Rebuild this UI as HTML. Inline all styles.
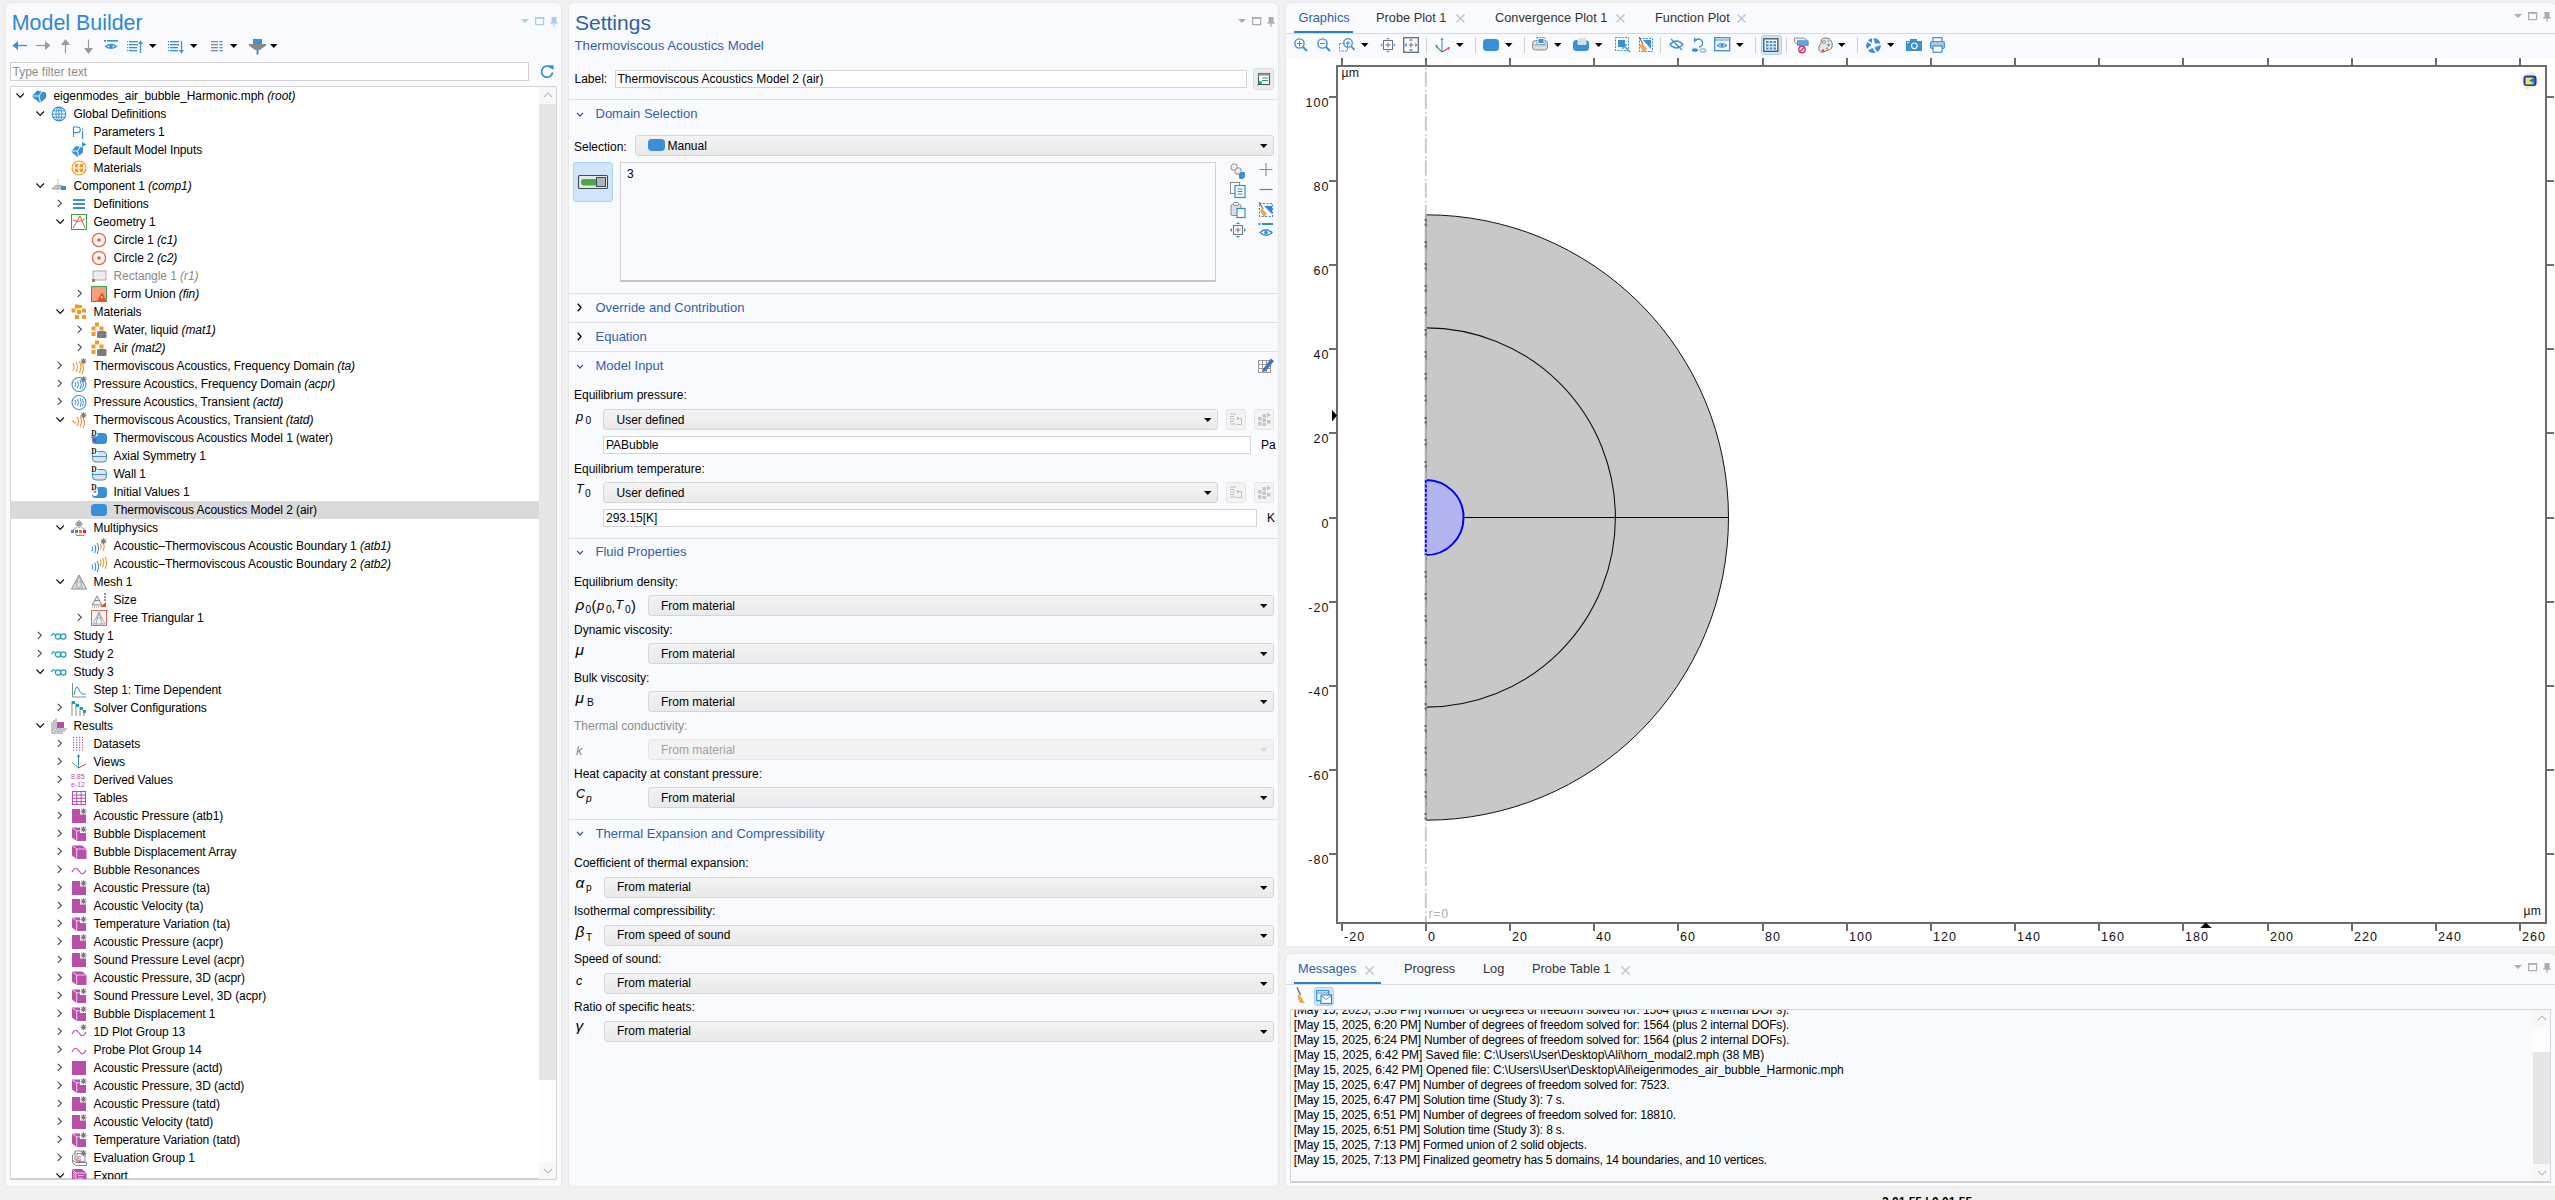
<!DOCTYPE html><html><head><meta charset="utf-8"><style>
html,body{margin:0;padding:0;}
body{width:2555px;height:1200px;overflow:hidden;background:#f0f0f0;font-family:"Liberation Sans", sans-serif;position:relative;}
.a{position:absolute;box-sizing:border-box;}
.t{position:absolute;white-space:pre;line-height:1;}
svg.a{overflow:visible;}
i{font-style:italic;}
</style></head><body>
<div class="a" style="left:5px;top:2px;width:557px;height:1185px;background:#f9fafd;border:1px solid #e7e8eb;border-radius:6px 6px 0 0;"></div>
<div class="a" style="left:568px;top:2px;width:711px;height:1185px;background:#f9fafd;border:1px solid #e7e8eb;border-radius:6px 6px 0 0;"></div>
<div class="a" style="left:1285px;top:2px;width:1272px;height:945px;background:#f9fafd;border:1px solid #e7e8eb;border-radius:6px 6px 0 0;"></div>
<div class="a" style="left:1285px;top:953px;width:1272px;height:234px;background:#f9fafd;border:1px solid #e7e8eb;border-radius:6px 6px 0 0;"></div>
<svg class="a" style="left:521px;top:16px" width="40" height="14" viewBox="0 0 40 14"><path d="M0 3 H8 L4 7 Z" fill="#a9cdea"/><rect x="14.6" y="1.6" width="8" height="7" fill="none" stroke="#a9cdea" stroke-width="1.2"/><rect x="14" y="1" width="9.2" height="1.8" fill="#a9cdea"/><rect x="30.5" y="1" width="5" height="6" fill="#a9cdea"/><rect x="29.3" y="6.3" width="7.4" height="1.4" fill="#a9cdea"/><rect x="32.4" y="7.5" width="1.2" height="3.5" fill="#a9cdea"/></svg>
<svg class="a" style="left:1238px;top:16px" width="40" height="14" viewBox="0 0 40 14"><path d="M0 3 H8 L4 7 Z" fill="#ababb0"/><rect x="14.6" y="1.6" width="8" height="7" fill="none" stroke="#ababb0" stroke-width="1.2"/><rect x="14" y="1" width="9.2" height="1.8" fill="#ababb0"/><rect x="30.5" y="1" width="5" height="6" fill="#ababb0"/><rect x="29.3" y="6.3" width="7.4" height="1.4" fill="#ababb0"/><rect x="32.4" y="7.5" width="1.2" height="3.5" fill="#ababb0"/></svg>
<svg class="a" style="left:2514px;top:11px" width="40" height="14" viewBox="0 0 40 14"><path d="M0 3 H8 L4 7 Z" fill="#ababb0"/><rect x="14.6" y="1.6" width="8" height="7" fill="none" stroke="#ababb0" stroke-width="1.2"/><rect x="14" y="1" width="9.2" height="1.8" fill="#ababb0"/><rect x="30.5" y="1" width="5" height="6" fill="#ababb0"/><rect x="29.3" y="6.3" width="7.4" height="1.4" fill="#ababb0"/><rect x="32.4" y="7.5" width="1.2" height="3.5" fill="#ababb0"/></svg>
<svg class="a" style="left:2514px;top:962px" width="40" height="14" viewBox="0 0 40 14"><path d="M0 3 H8 L4 7 Z" fill="#ababb0"/><rect x="14.6" y="1.6" width="8" height="7" fill="none" stroke="#ababb0" stroke-width="1.2"/><rect x="14" y="1" width="9.2" height="1.8" fill="#ababb0"/><rect x="30.5" y="1" width="5" height="6" fill="#ababb0"/><rect x="29.3" y="6.3" width="7.4" height="1.4" fill="#ababb0"/><rect x="32.4" y="7.5" width="1.2" height="3.5" fill="#ababb0"/></svg>
<div class="t" style="left:11.8px;top:12.88px;font-size:21.4px;color:#2b88d4;">Model Builder</div>
<svg class="a" style="left:12px;top:41px" width="16" height="9" viewBox="0 0 16 9"><path d="M0.5 4.5 L6 0 V9 Z" fill="#3a8fd6"/><path d="M4 4.5 H15" stroke="#3a8fd6" stroke-width="1.3"/></svg>
<svg class="a" style="left:35px;top:41px" width="16" height="9" viewBox="0 0 16 9"><path d="M15.5 4.5 L10 0 V9 Z" fill="#999"/><path d="M1 4.5 H12" stroke="#999" stroke-width="1.3"/></svg>
<svg class="a" style="left:61px;top:39px" width="9" height="15" viewBox="0 0 9 15"><path d="M4.5 0 L0 6 H9 Z" fill="#999"/><path d="M4.5 4 V14.5" stroke="#999" stroke-width="1.2"/></svg>
<svg class="a" style="left:84px;top:39px" width="9" height="15" viewBox="0 0 9 15"><path d="M4.5 15 L0 9 H9 Z" fill="#999"/><path d="M4.5 0.5 V11" stroke="#999" stroke-width="1.2"/></svg>
<svg class="a" style="left:104px;top:40px" width="15" height="10" viewBox="0 0 15 10"><rect x="0" y="0" width="2" height="1.6" fill="#3a8fd6"/><rect x="3" y="0" width="11" height="1.6" fill="#3a8fd6"/><path d="M1.5 6.5 Q7 2.5 12.5 6.5 Q7 10 1.5 6.5 Z" fill="none" stroke="#3a8fd6" stroke-width="1.3"/><circle cx="7" cy="6.4" r="1.6" fill="#3a8fd6"/></svg>
<svg class="a" style="left:127px;top:40px" width="17" height="14" viewBox="0 0 17 14"><rect x="0" y="1" width="1.2" height="1.2" fill="#3a8fd6"/><rect x="2" y="1" width="9" height="1.3" fill="#3a8fd6"/><rect x="0" y="4" width="1.2" height="1.2" fill="#3a8fd6"/><rect x="2" y="4" width="9" height="1.3" fill="#3a8fd6"/><rect x="0" y="7" width="1.2" height="1.2" fill="#3a8fd6"/><rect x="2" y="7" width="8" height="1.3" fill="#3a8fd6"/><rect x="0" y="10" width="1.2" height="1.2" fill="#3a8fd6"/><rect x="2" y="10" width="8" height="1.3" fill="#3a8fd6"/><path d="M13.5 1 V13" stroke="#3a8fd6" stroke-width="1.3"/><path d="M11 4 L13.5 0.5 L16 4 Z" fill="#3a8fd6"/></svg>
<svg class="a" style="left:149px;top:44px" width="8" height="5" viewBox="0 0 8 5"><path d="M0 0 H7.5 L3.75 4 Z" fill="#000"/></svg>
<svg class="a" style="left:168px;top:40px" width="17" height="14" viewBox="0 0 17 14"><rect x="0" y="1" width="1.2" height="1.2" fill="#3a8fd6"/><rect x="2" y="1" width="9" height="1.3" fill="#3a8fd6"/><rect x="0" y="4" width="1.2" height="1.2" fill="#3a8fd6"/><rect x="2" y="4" width="9" height="1.3" fill="#3a8fd6"/><rect x="0" y="7" width="1.2" height="1.2" fill="#3a8fd6"/><rect x="2" y="7" width="8" height="1.3" fill="#3a8fd6"/><rect x="0" y="10" width="1.2" height="1.2" fill="#3a8fd6"/><rect x="2" y="10" width="8" height="1.3" fill="#3a8fd6"/><path d="M13.5 1 V13" stroke="#3a8fd6" stroke-width="1.3"/><path d="M11 10 L13.5 13.5 L16 10 Z" fill="#3a8fd6"/></svg>
<svg class="a" style="left:190px;top:44px" width="8" height="5" viewBox="0 0 8 5"><path d="M0 0 H7.5 L3.75 4 Z" fill="#000"/></svg>
<svg class="a" style="left:211px;top:40px" width="12" height="13" viewBox="0 0 12 13"><rect x="0" y="1" width="7" height="1.3" fill="#888"/><rect x="8.5" y="1" width="3" height="1.3" fill="#3a8fd6"/><rect x="0" y="4" width="7" height="1.3" fill="#888"/><rect x="8.5" y="4" width="3" height="1.3" fill="#3a8fd6"/><rect x="0" y="7" width="7" height="1.3" fill="#888"/><rect x="8.5" y="7" width="3" height="1.3" fill="#3a8fd6"/><rect x="0" y="10" width="7" height="1.3" fill="#888"/><rect x="8.5" y="10" width="3" height="1.3" fill="#3a8fd6"/></svg>
<svg class="a" style="left:230px;top:44px" width="8" height="5" viewBox="0 0 8 5"><path d="M0 0 H7.5 L3.75 4 Z" fill="#000"/></svg>
<svg class="a" style="left:249px;top:39px" width="17" height="16" viewBox="0 0 17 16"><rect x="4" y="0" width="9" height="5" fill="#3a8fd6"/><path d="M0 5 H17 V6.5 L11 11 H6 L0 6.5 Z" fill="#888"/><rect x="7.5" y="11" width="2" height="4.5" fill="#3a8fd6"/></svg>
<svg class="a" style="left:270px;top:44px" width="8" height="5" viewBox="0 0 8 5"><path d="M0 0 H7.5 L3.75 4 Z" fill="#000"/></svg>
<div class="a" style="left:10px;top:62px;width:519px;height:19px;background:#fff;border:1px solid #d0d0d0;"></div>
<div class="t" style="left:12.5px;top:65.84px;font-size:12px;color:#8c8c8c;">Type filter text</div>
<svg class="a" style="left:539px;top:63px" width="16" height="16" viewBox="0 0 16 16"><path d="M12.5 5.2 A5.6 5.6 0 1 0 13.6 9.5" fill="none" stroke="#2f8ad4" stroke-width="1.6"/><path d="M9.5 2.2 L14.5 2.2 L14.5 7.2 Z" fill="#2f8ad4"/></svg>
<div class="a" style="left:10px;top:86px;width:547px;height:1094px;background:#fff;border:1px solid #d6d6d8;border-bottom:2px solid #d0d0d4;"></div>
<div class="a" style="left:539px;top:87px;width:17px;height:1092px;background:#fdfdfd;"></div>
<div class="a" style="left:539px;top:87px;width:17px;height:17px;background:#f7f7f7;"></div>
<div class="a" style="left:539px;top:104px;width:17px;height:976px;background:#e6e6e6;"></div>
<div class="a" style="left:539px;top:1162px;width:17px;height:17px;background:#f7f7f7;"></div>
<svg class="a" style="left:543px;top:92px" width="10" height="6" viewBox="0 0 10 6"><path d="M1 5 L5 1 L9 5" fill="none" stroke="#c0c0c0" stroke-width="1.2"/></svg>
<svg class="a" style="left:543px;top:1168px" width="10" height="6" viewBox="0 0 10 6"><path d="M1 1 L5 5 L9 1" fill="none" stroke="#c0c0c0" stroke-width="1.2"/></svg>
<div class="a" style="left:11px;top:87px;width:528px;height:1092px;overflow:hidden;">
<svg class="a" style="left:5.0px;top:6px" width="9" height="6" viewBox="0 0 9 6"><path d="M0.5 0.5 L4.2 4.4 L7.9 0.5" fill="none" stroke="#111" stroke-width="1.2"/></svg>
<svg class="a" style="left:20px;top:1px" width="16" height="16" viewBox="0 0 16 16"><path d="M1 8 L6 2.5 L15 4.5 L15 10 L9 15 L2.5 10 Z" fill="#3a8fd6"/><path d="M1.5 8 L8 8 L11 3.5 M8 8 L9.5 14.5" stroke="#fff" stroke-width="0.9" fill="none"/></svg>
<div class="t" style="left:42.5px;top:2.59px;font-size:12px;color:#000;letter-spacing:-0.07px;">eigenmodes_air_bubble_Harmonic.mph <i>(root)</i></div>
<svg class="a" style="left:25.0px;top:24px" width="9" height="6" viewBox="0 0 9 6"><path d="M0.5 0.5 L4.2 4.4 L7.9 0.5" fill="none" stroke="#111" stroke-width="1.2"/></svg>
<svg class="a" style="left:40px;top:19px" width="16" height="16" viewBox="0 0 16 16"><circle cx="8" cy="8" r="6.8" fill="none" stroke="#3a8fd6" stroke-width="1.2"/><ellipse cx="8" cy="8" rx="3" ry="6.8" fill="none" stroke="#3a8fd6" stroke-width="1"/><path d="M8 1.2 V14.8 M1.2 8 H14.8 M2.2 4.8 H13.8 M2.2 11.2 H13.8" stroke="#3a8fd6" stroke-width="1"/></svg>
<div class="t" style="left:62.5px;top:20.59px;font-size:12px;color:#000;letter-spacing:-0.07px;">Global Definitions</div>
<svg class="a" style="left:60px;top:37px" width="16" height="16" viewBox="0 0 16 16"><path d="M2.5 13 V3 H6.5 A2.8 2.8 0 0 1 6.5 8.6 H2.5" fill="none" stroke="#3a8fd6" stroke-width="1.1"/><path d="M11.5 7 V15" stroke="#3a8fd6" stroke-width="1.3"/><path d="M11.5 4.5 V5.8" stroke="#3a8fd6" stroke-width="1.3"/></svg>
<div class="t" style="left:82.5px;top:38.59px;font-size:12px;color:#000;letter-spacing:-0.07px;">Parameters 1</div>
<svg class="a" style="left:60px;top:55px" width="16" height="16" viewBox="0 0 16 16"><path d="M0.5 9 L5 4 L12 5.5 L12 10.5 L6.5 15 L1.5 11 Z" fill="#3a8fd6"/><path d="M1 9 L6.5 9 L9 5 M6.5 9 L7.5 14.5" stroke="#fff" stroke-width="0.9" fill="none"/><path d="M11 0 L15.5 2.5 L11 5 Z" fill="#27a0b8"/></svg>
<div class="t" style="left:82.5px;top:56.59px;font-size:12px;color:#000;letter-spacing:-0.07px;">Default Model Inputs</div>
<svg class="a" style="left:60px;top:73px" width="16" height="16" viewBox="0 0 16 16"><circle cx="8" cy="8" r="7" fill="#fdf1e0" stroke="#ef9a2a" stroke-width="1.2"/><rect x="4" y="4" width="3.3" height="3.3" fill="#ef9a2a"/><rect x="8.7" y="4" width="3.3" height="3.3" fill="#ef9a2a"/><rect x="4" y="8.7" width="3.3" height="3.3" fill="#ef9a2a"/><rect x="8.7" y="8.7" width="3.3" height="3.3" fill="#ef9a2a"/></svg>
<div class="t" style="left:82.5px;top:74.59px;font-size:12px;color:#000;letter-spacing:-0.07px;">Materials</div>
<svg class="a" style="left:25.0px;top:96px" width="9" height="6" viewBox="0 0 9 6"><path d="M0.5 0.5 L4.2 4.4 L7.9 0.5" fill="none" stroke="#111" stroke-width="1.2"/></svg>
<svg class="a" style="left:40px;top:91px" width="16" height="16" viewBox="0 0 16 16"><path d="M1 11 Q5 5 12 8 L12 11 Z" fill="#c8c8c8" stroke="#999" stroke-width="0.8"/><rect x="10" y="8" width="5" height="4" fill="#3a8fd6"/><path d="M7 1 V16" stroke="#aaa" stroke-width="0.8" stroke-dasharray="2 1"/></svg>
<div class="t" style="left:62.5px;top:92.59px;font-size:12px;color:#000;letter-spacing:-0.07px;">Component 1 <i>(comp1)</i></div>
<svg class="a" style="left:46.0px;top:112.2px" width="6" height="9" viewBox="0 0 6 9"><path d="M0.8 0.8 L4.3 4.3 L0.8 7.8" fill="none" stroke="#4a4a4a" stroke-width="1.15"/></svg>
<svg class="a" style="left:60px;top:109px" width="16" height="16" viewBox="0 0 16 16"><path d="M2 4 H14 M2 8 H14 M2 12 H14" stroke="#3a8fd6" stroke-width="2"/></svg>
<div class="t" style="left:82.5px;top:110.59px;font-size:12px;color:#000;letter-spacing:-0.07px;">Definitions</div>
<svg class="a" style="left:45.0px;top:132px" width="9" height="6" viewBox="0 0 9 6"><path d="M0.5 0.5 L4.2 4.4 L7.9 0.5" fill="none" stroke="#111" stroke-width="1.2"/></svg>
<svg class="a" style="left:60px;top:127px" width="16" height="16" viewBox="0 0 16 16"><rect x="0.5" y="0.5" width="15" height="15" fill="#fff" stroke="#3aa348" stroke-width="1"/><path d="M2 14 L9 2 L14 14 M2 6 Q8 9 14 5" fill="none" stroke="#e05a3a" stroke-width="1"/></svg>
<div class="t" style="left:82.5px;top:128.59px;font-size:12px;color:#000;letter-spacing:-0.07px;">Geometry 1</div>
<svg class="a" style="left:80px;top:145px" width="16" height="16" viewBox="0 0 16 16"><circle cx="8" cy="8" r="6.6" fill="#fdf3ef" stroke="#e06a4a" stroke-width="1.3"/><rect x="6.5" y="6.5" width="3" height="3" fill="#e05a3a"/></svg>
<div class="t" style="left:102.5px;top:146.59px;font-size:12px;color:#000;letter-spacing:-0.07px;">Circle 1 <i>(c1)</i></div>
<svg class="a" style="left:80px;top:163px" width="16" height="16" viewBox="0 0 16 16"><circle cx="8" cy="8" r="6.6" fill="#fdf3ef" stroke="#e06a4a" stroke-width="1.3"/><rect x="6.5" y="6.5" width="3" height="3" fill="#e05a3a"/></svg>
<div class="t" style="left:102.5px;top:164.59px;font-size:12px;color:#000;letter-spacing:-0.07px;">Circle 2 <i>(c2)</i></div>
<svg class="a" style="left:80px;top:181px" width="16" height="16" viewBox="0 0 16 16"><rect x="2" y="3" width="13" height="9" fill="#eee" stroke="#aaa" stroke-width="1"/><rect x="1" y="11" width="3" height="3" fill="#888"/></svg>
<div class="t" style="left:102.5px;top:182.59px;font-size:12px;color:#8a8a8a;letter-spacing:-0.07px;">Rectangle 1 <i>(r1)</i></div>
<svg class="a" style="left:66.0px;top:202.2px" width="6" height="9" viewBox="0 0 6 9"><path d="M0.8 0.8 L4.3 4.3 L0.8 7.8" fill="none" stroke="#4a4a4a" stroke-width="1.15"/></svg>
<svg class="a" style="left:80px;top:199px" width="16" height="16" viewBox="0 0 16 16"><rect x="0.5" y="0.5" width="15" height="15" fill="#f2a080" stroke="#3aa348" stroke-width="1"/><path d="M6 15 L11 6 L15.5 15 Z" fill="#e8502a"/><path d="M10.8 10 V12.5" stroke="#fff" stroke-width="1"/></svg>
<div class="t" style="left:102.5px;top:200.59px;font-size:12px;color:#000;letter-spacing:-0.07px;">Form Union <i>(fin)</i></div>
<svg class="a" style="left:45.0px;top:222px" width="9" height="6" viewBox="0 0 9 6"><path d="M0.5 0.5 L4.2 4.4 L7.9 0.5" fill="none" stroke="#111" stroke-width="1.2"/></svg>
<svg class="a" style="left:60px;top:217px" width="16" height="16" viewBox="0 0 16 16"><g fill="#ef9a2a"><rect x="4" y="0.5" width="4" height="4"/><rect x="0.5" y="4.5" width="4" height="4"/><rect x="6" y="6" width="4" height="4"/><rect x="11" y="4.5" width="4" height="4"/><rect x="4" y="11" width="4" height="4"/><rect x="11" y="11" width="4" height="4"/><rect x="8" y="1" width="3" height="3"/></g></svg>
<div class="t" style="left:82.5px;top:218.59px;font-size:12px;color:#000;letter-spacing:-0.07px;">Materials</div>
<svg class="a" style="left:66.0px;top:238.2px" width="6" height="9" viewBox="0 0 6 9"><path d="M0.8 0.8 L4.3 4.3 L0.8 7.8" fill="none" stroke="#4a4a4a" stroke-width="1.15"/></svg>
<svg class="a" style="left:80px;top:235px" width="16" height="16" viewBox="0 0 16 16"><g fill="#ef9a2a"><rect x="4" y="0.5" width="4" height="4"/><rect x="0.5" y="4.5" width="4" height="4"/><rect x="8.5" y="4.5" width="4" height="4"/><rect x="0.5" y="10" width="4" height="4"/></g><rect x="6" y="9" width="9.5" height="7" rx="1.5" fill="#7c7c7c"/></svg>
<div class="t" style="left:102.5px;top:236.59px;font-size:12px;color:#000;letter-spacing:-0.07px;">Water, liquid <i>(mat1)</i></div>
<svg class="a" style="left:66.0px;top:256.2px" width="6" height="9" viewBox="0 0 6 9"><path d="M0.8 0.8 L4.3 4.3 L0.8 7.8" fill="none" stroke="#4a4a4a" stroke-width="1.15"/></svg>
<svg class="a" style="left:80px;top:253px" width="16" height="16" viewBox="0 0 16 16"><g fill="#ef9a2a"><rect x="4" y="0.5" width="4" height="4"/><rect x="0.5" y="4.5" width="4" height="4"/><rect x="8.5" y="4.5" width="4" height="4"/><rect x="0.5" y="10" width="4" height="4"/></g><rect x="6" y="9" width="9.5" height="7" rx="1.5" fill="#7c7c7c"/></svg>
<div class="t" style="left:102.5px;top:254.59px;font-size:12px;color:#000;letter-spacing:-0.07px;">Air <i>(mat2)</i></div>
<svg class="a" style="left:46.0px;top:274.2px" width="6" height="9" viewBox="0 0 6 9"><path d="M0.8 0.8 L4.3 4.3 L0.8 7.8" fill="none" stroke="#4a4a4a" stroke-width="1.15"/></svg>
<svg class="a" style="left:60px;top:271px" width="16" height="16" viewBox="0 0 16 16"><g fill="none" stroke="#ef9a2a" stroke-width="1.1"><path d="M2 5 Q4 9 2 13"/><path d="M5 4 Q8 9 5 14"/><path d="M8 3 Q12 9 8 15"/><path d="M11 6 Q14 10 11 16"/></g><g stroke="#7a7a7a" stroke-width="1.1"><path d="M12.5 0.3 v6 M9.5 3.3 h6 M10.4 1.2 l4.2 4.2 M14.6 1.2 l-4.2 4.2"/></g></svg>
<div class="t" style="left:82.5px;top:272.59px;font-size:12px;color:#000;letter-spacing:-0.07px;">Thermoviscous Acoustics, Frequency Domain <i>(ta)</i></div>
<svg class="a" style="left:46.0px;top:292.2px" width="6" height="9" viewBox="0 0 6 9"><path d="M0.8 0.8 L4.3 4.3 L0.8 7.8" fill="none" stroke="#4a4a4a" stroke-width="1.15"/></svg>
<svg class="a" style="left:60px;top:289px" width="16" height="16" viewBox="0 0 16 16"><circle cx="8" cy="8.5" r="7" fill="none" stroke="#3a8fd6" stroke-width="1.1"/><g fill="none" stroke="#3a8fd6" stroke-width="1"><path d="M4 6 Q5.5 8.5 4 11"/><path d="M6.5 5 Q8.5 8.5 6.5 12"/><path d="M9 4 Q11.5 8.5 9 13"/><path d="M11.5 5 Q13.5 8.5 11.5 12"/></g><g stroke="#7a7a7a" stroke-width="1.1"><path d="M12.5 0.3 v6 M9.5 3.3 h6 M10.4 1.2 l4.2 4.2 M14.6 1.2 l-4.2 4.2"/></g></svg>
<div class="t" style="left:82.5px;top:290.59px;font-size:12px;color:#000;letter-spacing:-0.07px;">Pressure Acoustics, Frequency Domain <i>(acpr)</i></div>
<svg class="a" style="left:46.0px;top:310.2px" width="6" height="9" viewBox="0 0 6 9"><path d="M0.8 0.8 L4.3 4.3 L0.8 7.8" fill="none" stroke="#4a4a4a" stroke-width="1.15"/></svg>
<svg class="a" style="left:60px;top:307px" width="16" height="16" viewBox="0 0 16 16"><circle cx="8" cy="8.5" r="7" fill="none" stroke="#3a8fd6" stroke-width="1.1"/><g fill="none" stroke="#3a8fd6" stroke-width="1"><path d="M4 6 Q5.5 8.5 4 11"/><path d="M6.5 5 Q8.5 8.5 6.5 12"/><path d="M9 4 Q11.5 8.5 9 13"/><path d="M11.5 5 Q13.5 8.5 11.5 12"/></g></svg>
<div class="t" style="left:82.5px;top:308.59px;font-size:12px;color:#000;letter-spacing:-0.07px;">Pressure Acoustics, Transient <i>(actd)</i></div>
<svg class="a" style="left:45.0px;top:330px" width="9" height="6" viewBox="0 0 9 6"><path d="M0.5 0.5 L4.2 4.4 L7.9 0.5" fill="none" stroke="#111" stroke-width="1.2"/></svg>
<svg class="a" style="left:60px;top:325px" width="16" height="16" viewBox="0 0 16 16"><g fill="none" stroke="#ef9a2a" stroke-width="1.1"><path d="M1 10 Q2 8 3 10 Q4 12 5 10"/><path d="M6 5 Q9 9 6 14"/><path d="M9 4 Q12 9 9 15"/><path d="M12 6 Q15 10 12 16"/></g><g stroke="#7a7a7a" stroke-width="1.1"><path d="M12.5 0.3 v6 M9.5 3.3 h6 M10.4 1.2 l4.2 4.2 M14.6 1.2 l-4.2 4.2"/></g></svg>
<div class="t" style="left:82.5px;top:326.59px;font-size:12px;color:#000;letter-spacing:-0.07px;">Thermoviscous Acoustics, Transient <i>(tatd)</i></div>
<svg class="a" style="left:80px;top:343px" width="16" height="16" viewBox="0 0 16 16"><rect x="1" y="3" width="15" height="11" rx="3.5" fill="#3a8fd6"/><rect x="0" y="0" width="6.5" height="6.5" fill="#fff"/><rect x="0" y="6.5" width="7" height="1.3" fill="#3a8fd6"/><path d="M1.5 9 L6 9 L3.75 12.5 Z" fill="#e02060"/><text x="0.3" y="6.2" font-size="7.5" font-family="Liberation Serif" font-weight="bold" fill="#111">D</text></svg>
<div class="t" style="left:102.5px;top:344.59px;font-size:12px;color:#000;letter-spacing:-0.07px;">Thermoviscous Acoustics Model 1 (water)</div>
<svg class="a" style="left:80px;top:361px" width="16" height="16" viewBox="0 0 16 16"><rect x="1.5" y="3.5" width="14" height="10.5" rx="3.5" fill="#e2e2e4" stroke="#3a8fd6" stroke-width="1"/><path d="M1.5 8.5 H15.5" stroke="#3a8fd6" stroke-width="1"/><rect x="0" y="0" width="6.5" height="6.5" fill="#fff"/><text x="0.3" y="6.2" font-size="7.5" font-family="Liberation Serif" font-weight="bold" fill="#111">D</text></svg>
<div class="t" style="left:102.5px;top:362.59px;font-size:12px;color:#000;letter-spacing:-0.07px;">Axial Symmetry 1</div>
<svg class="a" style="left:80px;top:379px" width="16" height="16" viewBox="0 0 16 16"><rect x="1.5" y="3.5" width="14" height="10.5" rx="3.5" fill="#e2e2e4" stroke="#3a8fd6" stroke-width="1"/><path d="M1.5 8.5 H15.5" stroke="#3a8fd6" stroke-width="1"/><rect x="0" y="0" width="6.5" height="6.5" fill="#fff"/><text x="0.3" y="6.2" font-size="7.5" font-family="Liberation Serif" font-weight="bold" fill="#111">D</text></svg>
<div class="t" style="left:102.5px;top:380.59px;font-size:12px;color:#000;letter-spacing:-0.07px;">Wall 1</div>
<svg class="a" style="left:80px;top:397px" width="16" height="16" viewBox="0 0 16 16"><rect x="1" y="3" width="15" height="11" rx="3.5" fill="#3a8fd6"/><rect x="0" y="0" width="6.5" height="6.5" fill="#fff"/><path d="M1 6.5 H7 V9 A3 3 0 0 1 1 9 Z" fill="#fff"/><path d="M2.2 7.3 H5.8 L4 9.6 Z" fill="#e8502a"/><text x="0.3" y="6.2" font-size="7.5" font-family="Liberation Serif" font-weight="bold" fill="#111">D</text></svg>
<div class="t" style="left:102.5px;top:398.59px;font-size:12px;color:#000;letter-spacing:-0.07px;">Initial Values 1</div>
<div class="a" style="left:0px;top:414px;width:528px;height:18px;background:#dadadc;"></div>
<svg class="a" style="left:80px;top:415px" width="16" height="16" viewBox="0 0 16 16"><rect x="0" y="2" width="16" height="12" rx="3.5" fill="#3a8fd6"/></svg>
<div class="t" style="left:102.5px;top:416.59px;font-size:12px;color:#000;letter-spacing:-0.07px;">Thermoviscous Acoustics Model 2 (air)</div>
<svg class="a" style="left:45.0px;top:438px" width="9" height="6" viewBox="0 0 9 6"><path d="M0.5 0.5 L4.2 4.4 L7.9 0.5" fill="none" stroke="#111" stroke-width="1.2"/></svg>
<svg class="a" style="left:60px;top:433px" width="16" height="16" viewBox="0 0 16 16"><g fill="none" stroke="#888" stroke-width="0.9"><ellipse cx="8" cy="4" rx="3.5" ry="1.6"/><ellipse cx="8" cy="4" rx="1.6" ry="3.5"/><path d="M2 10 L6 7 M14 10 L10 7 M5 13.5 V15.5 H13 V13.5 M9 13.5 V15.5"/></g><circle cx="8" cy="4" r="1" fill="#3aa348"/><rect x="0" y="10" width="3" height="3" fill="#3a8fd6"/><rect x="4" y="10" width="3" height="3" fill="#3aa348"/><rect x="8" y="10" width="3" height="3" fill="#f07030"/><rect x="12" y="10" width="3" height="3" fill="#e0108a"/></svg>
<div class="t" style="left:82.5px;top:434.59px;font-size:12px;color:#000;letter-spacing:-0.07px;">Multiphysics</div>
<svg class="a" style="left:80px;top:451px" width="16" height="16" viewBox="0 0 16 16"><g fill="none" stroke="#3a8fd6" stroke-width="1.1"><path d="M1 8.5 Q2.6 11 1 13.5"/><path d="M3.6 6.8 Q5.8 11 3.6 15"/><path d="M6.2 5 Q8.8 10.5 6.2 16"/></g><g fill="none" stroke="#ef9a2a" stroke-width="1.1"><path d="M9.3 6 Q11.3 8.8 9.3 11.5"/><path d="M11.8 4.8 Q14.5 8.8 11.8 13"/></g><g stroke="#7a7a7a" stroke-width="1.1"><path d="M12.5 0.3 v6 M9.5 3.3 h6 M10.4 1.2 l4.2 4.2 M14.6 1.2 l-4.2 4.2"/></g></svg>
<div class="t" style="left:102.5px;top:452.59px;font-size:12px;color:#000;letter-spacing:-0.07px;">Acoustic–Thermoviscous Acoustic Boundary 1 <i>(atb1)</i></div>
<svg class="a" style="left:80px;top:469px" width="16" height="16" viewBox="0 0 16 16"><g fill="none" stroke="#3a8fd6" stroke-width="1.1"><path d="M1 8.5 Q2.6 11 1 13.5"/><path d="M3.6 6.8 Q5.8 11 3.6 15"/><path d="M6.2 5 Q8.8 10.5 6.2 16"/></g><g fill="none" stroke="#ef9a2a" stroke-width="1.1"><path d="M9 3.5 Q11 6.8 9 10"/><path d="M11.5 2 Q14 6.8 11.5 11.5"/><path d="M14 0.7 Q17 6.8 14 12.8"/></g></svg>
<div class="t" style="left:102.5px;top:470.59px;font-size:12px;color:#000;letter-spacing:-0.07px;">Acoustic–Thermoviscous Acoustic Boundary 2 <i>(atb2)</i></div>
<svg class="a" style="left:45.0px;top:492px" width="9" height="6" viewBox="0 0 9 6"><path d="M0.5 0.5 L4.2 4.4 L7.9 0.5" fill="none" stroke="#111" stroke-width="1.2"/></svg>
<svg class="a" style="left:60px;top:487px" width="16" height="16" viewBox="0 0 16 16"><path d="M8 1 L15.5 15 H0.5 Z" fill="#e4e4e4" stroke="#8a8a8a" stroke-width="1"/><path d="M4.3 8 H11.7 M8 1 L4.3 15 M8 1 L11.7 15 M4.3 8 L8 15 L11.7 8" fill="none" stroke="#9a9a9a" stroke-width="0.7"/></svg>
<div class="t" style="left:82.5px;top:488.59px;font-size:12px;color:#000;letter-spacing:-0.07px;">Mesh 1</div>
<svg class="a" style="left:80px;top:505px" width="16" height="16" viewBox="0 0 16 16"><path d="M6 4 L11 13 H1 Z M3.5 8.5 H8.5" fill="#eee" stroke="#888" stroke-width="1"/><path d="M14 1 V10" stroke="#777" stroke-width="1.5" stroke-dasharray="2 1"/><path d="M9 15 L15 10 V15 Z" fill="#e8502a"/><path d="M1 15 H9" stroke="#888" stroke-dasharray="1 1"/></svg>
<div class="t" style="left:102.5px;top:506.59px;font-size:12px;color:#000;letter-spacing:-0.07px;">Size</div>
<svg class="a" style="left:66.0px;top:526.2px" width="6" height="9" viewBox="0 0 6 9"><path d="M0.8 0.8 L4.3 4.3 L0.8 7.8" fill="none" stroke="#4a4a4a" stroke-width="1.15"/></svg>
<svg class="a" style="left:80px;top:523px" width="16" height="16" viewBox="0 0 16 16"><rect x="0.5" y="0.5" width="15" height="15" fill="#f4f4f4" stroke="#e06a4a" stroke-width="1"/><path d="M2 14 L8 2 L14 14 Z M5 8 H11 M8 2 L5 14 M8 2 L11 14" fill="none" stroke="#999" stroke-width="0.8"/></svg>
<div class="t" style="left:102.5px;top:524.59px;font-size:12px;color:#000;letter-spacing:-0.07px;">Free Triangular 1</div>
<svg class="a" style="left:26.0px;top:544.2px" width="6" height="9" viewBox="0 0 6 9"><path d="M0.8 0.8 L4.3 4.3 L0.8 7.8" fill="none" stroke="#4a4a4a" stroke-width="1.15"/></svg>
<svg class="a" style="left:40px;top:541px" width="16" height="16" viewBox="0 0 16 16"><g fill="none" stroke="#1f9ab3" stroke-width="1.2"><path d="M0.5 8 Q2 4 4 7"/><circle cx="7" cy="8.5" r="2.6"/><circle cx="12.3" cy="8.5" r="2.6"/></g></svg>
<div class="t" style="left:62.5px;top:542.59px;font-size:12px;color:#000;letter-spacing:-0.07px;">Study 1</div>
<svg class="a" style="left:26.0px;top:562.2px" width="6" height="9" viewBox="0 0 6 9"><path d="M0.8 0.8 L4.3 4.3 L0.8 7.8" fill="none" stroke="#4a4a4a" stroke-width="1.15"/></svg>
<svg class="a" style="left:40px;top:559px" width="16" height="16" viewBox="0 0 16 16"><g fill="none" stroke="#1f9ab3" stroke-width="1.2"><path d="M0.5 8 Q2 4 4 7"/><circle cx="7" cy="8.5" r="2.6"/><circle cx="12.3" cy="8.5" r="2.6"/></g></svg>
<div class="t" style="left:62.5px;top:560.59px;font-size:12px;color:#000;letter-spacing:-0.07px;">Study 2</div>
<svg class="a" style="left:25.0px;top:582px" width="9" height="6" viewBox="0 0 9 6"><path d="M0.5 0.5 L4.2 4.4 L7.9 0.5" fill="none" stroke="#111" stroke-width="1.2"/></svg>
<svg class="a" style="left:40px;top:577px" width="16" height="16" viewBox="0 0 16 16"><g fill="none" stroke="#1f9ab3" stroke-width="1.2"><path d="M0.5 8 Q2 4 4 7"/><circle cx="7" cy="8.5" r="2.6"/><circle cx="12.3" cy="8.5" r="2.6"/></g></svg>
<div class="t" style="left:62.5px;top:578.59px;font-size:12px;color:#000;letter-spacing:-0.07px;">Study 3</div>
<svg class="a" style="left:60px;top:595px" width="16" height="16" viewBox="0 0 16 16"><path d="M1.5 1 V15 H15" fill="none" stroke="#888" stroke-width="1"/><path d="M3 13 Q5 2 7 6 T11 12 H15" fill="none" stroke="#1f9ab3" stroke-width="1"/></svg>
<div class="t" style="left:82.5px;top:596.59px;font-size:12px;color:#000;letter-spacing:-0.07px;">Step 1: Time Dependent</div>
<svg class="a" style="left:46.0px;top:616.2px" width="6" height="9" viewBox="0 0 6 9"><path d="M0.8 0.8 L4.3 4.3 L0.8 7.8" fill="none" stroke="#4a4a4a" stroke-width="1.15"/></svg>
<svg class="a" style="left:60px;top:613px" width="16" height="16" viewBox="0 0 16 16"><path d="M1 1 V16 M5 3 V16 M9 7 V16 M13 10 V16" stroke="#888" stroke-width="1"/><rect x="1" y="1" width="3" height="3" fill="#1f9ab3"/><rect x="5" y="4" width="3" height="3" fill="#1f9ab3"/><rect x="9" y="7" width="3" height="3" fill="#1f9ab3"/><rect x="12" y="10" width="3" height="3" fill="#1f9ab3"/></svg>
<div class="t" style="left:82.5px;top:614.59px;font-size:12px;color:#000;letter-spacing:-0.07px;">Solver Configurations</div>
<svg class="a" style="left:25.0px;top:636px" width="9" height="6" viewBox="0 0 9 6"><path d="M0.5 0.5 L4.2 4.4 L7.9 0.5" fill="none" stroke="#111" stroke-width="1.2"/></svg>
<svg class="a" style="left:40px;top:631px" width="16" height="16" viewBox="0 0 16 16"><path d="M1 4 V15 H12 M3 2 V13 H14 M5 0.5 V11 H16" fill="none" stroke="#888" stroke-width="1"/><rect x="6" y="4" width="7" height="6" fill="#b74fa8"/></svg>
<div class="t" style="left:62.5px;top:632.59px;font-size:12px;color:#000;letter-spacing:-0.07px;">Results</div>
<svg class="a" style="left:46.0px;top:652.2px" width="6" height="9" viewBox="0 0 6 9"><path d="M0.8 0.8 L4.3 4.3 L0.8 7.8" fill="none" stroke="#4a4a4a" stroke-width="1.15"/></svg>
<svg class="a" style="left:60px;top:649px" width="16" height="16" viewBox="0 0 16 16"><g fill="#b74fa8"><rect x="2" y="1.0" width="1.2" height="1.2"/><rect x="2" y="3.5" width="1.2" height="1.2"/><rect x="2" y="6.0" width="1.2" height="1.2"/><rect x="2" y="8.5" width="1.2" height="1.2"/><rect x="2" y="11.0" width="1.2" height="1.2"/><rect x="2" y="13.5" width="1.2" height="1.2"/><rect x="5" y="1.0" width="1.2" height="1.2"/><rect x="5" y="3.5" width="1.2" height="1.2"/><rect x="5" y="6.0" width="1.2" height="1.2"/><rect x="5" y="8.5" width="1.2" height="1.2"/><rect x="5" y="11.0" width="1.2" height="1.2"/><rect x="5" y="13.5" width="1.2" height="1.2"/><rect x="8" y="1.0" width="1.2" height="1.2"/><rect x="8" y="3.5" width="1.2" height="1.2"/><rect x="8" y="6.0" width="1.2" height="1.2"/><rect x="8" y="8.5" width="1.2" height="1.2"/><rect x="8" y="11.0" width="1.2" height="1.2"/><rect x="8" y="13.5" width="1.2" height="1.2"/><rect x="11" y="1.0" width="1.2" height="1.2"/><rect x="11" y="3.5" width="1.2" height="1.2"/><rect x="11" y="6.0" width="1.2" height="1.2"/><rect x="11" y="8.5" width="1.2" height="1.2"/><rect x="11" y="11.0" width="1.2" height="1.2"/><rect x="11" y="13.5" width="1.2" height="1.2"/></g></svg>
<div class="t" style="left:82.5px;top:650.59px;font-size:12px;color:#000;letter-spacing:-0.07px;">Datasets</div>
<svg class="a" style="left:46.0px;top:670.2px" width="6" height="9" viewBox="0 0 6 9"><path d="M0.8 0.8 L4.3 4.3 L0.8 7.8" fill="none" stroke="#4a4a4a" stroke-width="1.15"/></svg>
<svg class="a" style="left:60px;top:667px" width="16" height="16" viewBox="0 0 16 16"><path d="M7.5 14 V2" stroke="#3a8fd6" stroke-width="1"/><path d="M5.5 3 L7.5 0 L9.5 3 Z" fill="#3a8fd6"/><path d="M7.5 14 L1 8" stroke="#3aa348" stroke-width="1"/><path d="M7.5 14 L15 10" stroke="#e03060" stroke-width="1"/></svg>
<div class="t" style="left:82.5px;top:668.59px;font-size:12px;color:#000;letter-spacing:-0.07px;">Views</div>
<svg class="a" style="left:46.0px;top:688.2px" width="6" height="9" viewBox="0 0 6 9"><path d="M0.8 0.8 L4.3 4.3 L0.8 7.8" fill="none" stroke="#4a4a4a" stroke-width="1.15"/></svg>
<svg class="a" style="left:60px;top:685px" width="16" height="16" viewBox="0 0 16 16"><text x="0" y="7" font-size="7" font-family="Liberation Sans" fill="#b74fa8">8.85</text><text x="0" y="14.5" font-size="7" font-family="Liberation Sans" fill="#b74fa8">e-12</text></svg>
<div class="t" style="left:82.5px;top:686.59px;font-size:12px;color:#000;letter-spacing:-0.07px;">Derived Values</div>
<svg class="a" style="left:46.0px;top:706.2px" width="6" height="9" viewBox="0 0 6 9"><path d="M0.8 0.8 L4.3 4.3 L0.8 7.8" fill="none" stroke="#4a4a4a" stroke-width="1.15"/></svg>
<svg class="a" style="left:60px;top:703px" width="16" height="16" viewBox="0 0 16 16"><rect x="1.5" y="1.5" width="13" height="13" fill="none" stroke="#b74fa8" stroke-width="1.1"/><path d="M1.5 5 H14.5 M1.5 8.3 H14.5 M1.5 11.6 H14.5 M5.8 1.5 V14.5 M10.2 1.5 V14.5" stroke="#b74fa8" stroke-width="1"/></svg>
<div class="t" style="left:82.5px;top:704.59px;font-size:12px;color:#000;letter-spacing:-0.07px;">Tables</div>
<svg class="a" style="left:46.0px;top:724.2px" width="6" height="9" viewBox="0 0 6 9"><path d="M0.8 0.8 L4.3 4.3 L0.8 7.8" fill="none" stroke="#4a4a4a" stroke-width="1.15"/></svg>
<svg class="a" style="left:60px;top:721px" width="16" height="16" viewBox="0 0 16 16"><path d="M1 1 H9 V6.5 H15 V15 H1 Z" fill="#b74fa8"/><g stroke="#7a7a7a" stroke-width="1.1"><path d="M12.5 0.3 v6 M9.5 3.3 h6 M10.4 1.2 l4.2 4.2 M14.6 1.2 l-4.2 4.2"/></g></svg>
<div class="t" style="left:82.5px;top:722.59px;font-size:12px;color:#000;letter-spacing:-0.07px;">Acoustic Pressure (atb1)</div>
<svg class="a" style="left:46.0px;top:742.2px" width="6" height="9" viewBox="0 0 6 9"><path d="M0.8 0.8 L4.3 4.3 L0.8 7.8" fill="none" stroke="#4a4a4a" stroke-width="1.15"/></svg>
<svg class="a" style="left:60px;top:739px" width="16" height="16" viewBox="0 0 16 16"><path d="M1 1.5 L9 1.5 V7 H15 V15 H5.5 L1 11.5 Z" fill="#b74fa8"/><path d="M1.2 1.8 L5.7 4.8 H9 M5.7 4.8 V15" stroke="#f4dcf0" stroke-width="0.9" fill="none"/><g stroke="#7a7a7a" stroke-width="1.1"><path d="M12.5 0.3 v6 M9.5 3.3 h6 M10.4 1.2 l4.2 4.2 M14.6 1.2 l-4.2 4.2"/></g></svg>
<div class="t" style="left:82.5px;top:740.59px;font-size:12px;color:#000;letter-spacing:-0.07px;">Bubble Displacement</div>
<svg class="a" style="left:46.0px;top:760.2px" width="6" height="9" viewBox="0 0 6 9"><path d="M0.8 0.8 L4.3 4.3 L0.8 7.8" fill="none" stroke="#4a4a4a" stroke-width="1.15"/></svg>
<svg class="a" style="left:60px;top:757px" width="16" height="16" viewBox="0 0 16 16"><path d="M1 1.5 L11 1.5 L15.5 5 V15 H5.5 L1 11.5 Z" fill="#b74fa8"/><path d="M1.2 1.8 L5.7 5 H15.5 M5.7 5 V15" stroke="#f4dcf0" stroke-width="0.9" fill="none"/></svg>
<div class="t" style="left:82.5px;top:758.59px;font-size:12px;color:#000;letter-spacing:-0.07px;">Bubble Displacement Array</div>
<svg class="a" style="left:46.0px;top:778.2px" width="6" height="9" viewBox="0 0 6 9"><path d="M0.8 0.8 L4.3 4.3 L0.8 7.8" fill="none" stroke="#4a4a4a" stroke-width="1.15"/></svg>
<svg class="a" style="left:60px;top:775px" width="16" height="16" viewBox="0 0 16 16"><path d="M1 10 Q4 3 8 9 T15 8" fill="none" stroke="#b74fa8" stroke-width="1.2"/></svg>
<div class="t" style="left:82.5px;top:776.59px;font-size:12px;color:#000;letter-spacing:-0.07px;">Bubble Resonances</div>
<svg class="a" style="left:46.0px;top:796.2px" width="6" height="9" viewBox="0 0 6 9"><path d="M0.8 0.8 L4.3 4.3 L0.8 7.8" fill="none" stroke="#4a4a4a" stroke-width="1.15"/></svg>
<svg class="a" style="left:60px;top:793px" width="16" height="16" viewBox="0 0 16 16"><path d="M1 1 H9 V6.5 H15 V15 H1 Z" fill="#b74fa8"/><g stroke="#7a7a7a" stroke-width="1.1"><path d="M12.5 0.3 v6 M9.5 3.3 h6 M10.4 1.2 l4.2 4.2 M14.6 1.2 l-4.2 4.2"/></g></svg>
<div class="t" style="left:82.5px;top:794.59px;font-size:12px;color:#000;letter-spacing:-0.07px;">Acoustic Pressure (ta)</div>
<svg class="a" style="left:46.0px;top:814.2px" width="6" height="9" viewBox="0 0 6 9"><path d="M0.8 0.8 L4.3 4.3 L0.8 7.8" fill="none" stroke="#4a4a4a" stroke-width="1.15"/></svg>
<svg class="a" style="left:60px;top:811px" width="16" height="16" viewBox="0 0 16 16"><path d="M1 1 H9 V6.5 H15 V15 H1 Z" fill="#b74fa8"/><g stroke="#7a7a7a" stroke-width="1.1"><path d="M12.5 0.3 v6 M9.5 3.3 h6 M10.4 1.2 l4.2 4.2 M14.6 1.2 l-4.2 4.2"/></g></svg>
<div class="t" style="left:82.5px;top:812.59px;font-size:12px;color:#000;letter-spacing:-0.07px;">Acoustic Velocity (ta)</div>
<svg class="a" style="left:46.0px;top:832.2px" width="6" height="9" viewBox="0 0 6 9"><path d="M0.8 0.8 L4.3 4.3 L0.8 7.8" fill="none" stroke="#4a4a4a" stroke-width="1.15"/></svg>
<svg class="a" style="left:60px;top:829px" width="16" height="16" viewBox="0 0 16 16"><path d="M1 1.5 L9 1.5 V7 H15 V15 H5.5 L1 11.5 Z" fill="#b74fa8"/><path d="M1.2 1.8 L5.7 4.8 H9 M5.7 4.8 V15" stroke="#f4dcf0" stroke-width="0.9" fill="none"/><g stroke="#7a7a7a" stroke-width="1.1"><path d="M12.5 0.3 v6 M9.5 3.3 h6 M10.4 1.2 l4.2 4.2 M14.6 1.2 l-4.2 4.2"/></g></svg>
<div class="t" style="left:82.5px;top:830.59px;font-size:12px;color:#000;letter-spacing:-0.07px;">Temperature Variation (ta)</div>
<svg class="a" style="left:46.0px;top:850.2px" width="6" height="9" viewBox="0 0 6 9"><path d="M0.8 0.8 L4.3 4.3 L0.8 7.8" fill="none" stroke="#4a4a4a" stroke-width="1.15"/></svg>
<svg class="a" style="left:60px;top:847px" width="16" height="16" viewBox="0 0 16 16"><path d="M1 1 H9 V6.5 H15 V15 H1 Z" fill="#b74fa8"/><g stroke="#7a7a7a" stroke-width="1.1"><path d="M12.5 0.3 v6 M9.5 3.3 h6 M10.4 1.2 l4.2 4.2 M14.6 1.2 l-4.2 4.2"/></g></svg>
<div class="t" style="left:82.5px;top:848.59px;font-size:12px;color:#000;letter-spacing:-0.07px;">Acoustic Pressure (acpr)</div>
<svg class="a" style="left:46.0px;top:868.2px" width="6" height="9" viewBox="0 0 6 9"><path d="M0.8 0.8 L4.3 4.3 L0.8 7.8" fill="none" stroke="#4a4a4a" stroke-width="1.15"/></svg>
<svg class="a" style="left:60px;top:865px" width="16" height="16" viewBox="0 0 16 16"><path d="M1 1 H9 V6.5 H15 V15 H1 Z" fill="#b74fa8"/><g stroke="#7a7a7a" stroke-width="1.1"><path d="M12.5 0.3 v6 M9.5 3.3 h6 M10.4 1.2 l4.2 4.2 M14.6 1.2 l-4.2 4.2"/></g></svg>
<div class="t" style="left:82.5px;top:866.59px;font-size:12px;color:#000;letter-spacing:-0.07px;">Sound Pressure Level (acpr)</div>
<svg class="a" style="left:46.0px;top:886.2px" width="6" height="9" viewBox="0 0 6 9"><path d="M0.8 0.8 L4.3 4.3 L0.8 7.8" fill="none" stroke="#4a4a4a" stroke-width="1.15"/></svg>
<svg class="a" style="left:60px;top:883px" width="16" height="16" viewBox="0 0 16 16"><path d="M1 1.5 L11 1.5 L15.5 5 V15 H5.5 L1 11.5 Z" fill="#b74fa8"/><path d="M1.2 1.8 L5.7 5 H15.5 M5.7 5 V15" stroke="#f4dcf0" stroke-width="0.9" fill="none"/></svg>
<div class="t" style="left:82.5px;top:884.59px;font-size:12px;color:#000;letter-spacing:-0.07px;">Acoustic Pressure, 3D (acpr)</div>
<svg class="a" style="left:46.0px;top:904.2px" width="6" height="9" viewBox="0 0 6 9"><path d="M0.8 0.8 L4.3 4.3 L0.8 7.8" fill="none" stroke="#4a4a4a" stroke-width="1.15"/></svg>
<svg class="a" style="left:60px;top:901px" width="16" height="16" viewBox="0 0 16 16"><path d="M1 1.5 L9 1.5 V7 H15 V15 H5.5 L1 11.5 Z" fill="#b74fa8"/><path d="M1.2 1.8 L5.7 4.8 H9 M5.7 4.8 V15" stroke="#f4dcf0" stroke-width="0.9" fill="none"/><g stroke="#7a7a7a" stroke-width="1.1"><path d="M12.5 0.3 v6 M9.5 3.3 h6 M10.4 1.2 l4.2 4.2 M14.6 1.2 l-4.2 4.2"/></g></svg>
<div class="t" style="left:82.5px;top:902.59px;font-size:12px;color:#000;letter-spacing:-0.07px;">Sound Pressure Level, 3D (acpr)</div>
<svg class="a" style="left:46.0px;top:922.2px" width="6" height="9" viewBox="0 0 6 9"><path d="M0.8 0.8 L4.3 4.3 L0.8 7.8" fill="none" stroke="#4a4a4a" stroke-width="1.15"/></svg>
<svg class="a" style="left:60px;top:919px" width="16" height="16" viewBox="0 0 16 16"><path d="M1 1.5 L9 1.5 V7 H15 V15 H5.5 L1 11.5 Z" fill="#b74fa8"/><path d="M1.2 1.8 L5.7 4.8 H9 M5.7 4.8 V15" stroke="#f4dcf0" stroke-width="0.9" fill="none"/><g stroke="#7a7a7a" stroke-width="1.1"><path d="M12.5 0.3 v6 M9.5 3.3 h6 M10.4 1.2 l4.2 4.2 M14.6 1.2 l-4.2 4.2"/></g></svg>
<div class="t" style="left:82.5px;top:920.59px;font-size:12px;color:#000;letter-spacing:-0.07px;">Bubble Displacement 1</div>
<svg class="a" style="left:46.0px;top:940.2px" width="6" height="9" viewBox="0 0 6 9"><path d="M0.8 0.8 L4.3 4.3 L0.8 7.8" fill="none" stroke="#4a4a4a" stroke-width="1.15"/></svg>
<svg class="a" style="left:60px;top:937px" width="16" height="16" viewBox="0 0 16 16"><path d="M1 10 Q4 3 8 9 T15 8" fill="none" stroke="#b74fa8" stroke-width="1.2"/><g stroke="#7a7a7a" stroke-width="1.1"><path d="M12.5 0.3 v6 M9.5 3.3 h6 M10.4 1.2 l4.2 4.2 M14.6 1.2 l-4.2 4.2"/></g></svg>
<div class="t" style="left:82.5px;top:938.59px;font-size:12px;color:#000;letter-spacing:-0.07px;">1D Plot Group 13</div>
<svg class="a" style="left:46.0px;top:958.2px" width="6" height="9" viewBox="0 0 6 9"><path d="M0.8 0.8 L4.3 4.3 L0.8 7.8" fill="none" stroke="#4a4a4a" stroke-width="1.15"/></svg>
<svg class="a" style="left:60px;top:955px" width="16" height="16" viewBox="0 0 16 16"><path d="M1 10 Q4 3 8 9 T15 8" fill="none" stroke="#b74fa8" stroke-width="1.2"/></svg>
<div class="t" style="left:82.5px;top:956.59px;font-size:12px;color:#000;letter-spacing:-0.07px;">Probe Plot Group 14</div>
<svg class="a" style="left:46.0px;top:976.2px" width="6" height="9" viewBox="0 0 6 9"><path d="M0.8 0.8 L4.3 4.3 L0.8 7.8" fill="none" stroke="#4a4a4a" stroke-width="1.15"/></svg>
<svg class="a" style="left:60px;top:973px" width="16" height="16" viewBox="0 0 16 16"><rect x="1" y="1" width="14" height="14" fill="#b74fa8"/></svg>
<div class="t" style="left:82.5px;top:974.59px;font-size:12px;color:#000;letter-spacing:-0.07px;">Acoustic Pressure (actd)</div>
<svg class="a" style="left:46.0px;top:994.2px" width="6" height="9" viewBox="0 0 6 9"><path d="M0.8 0.8 L4.3 4.3 L0.8 7.8" fill="none" stroke="#4a4a4a" stroke-width="1.15"/></svg>
<svg class="a" style="left:60px;top:991px" width="16" height="16" viewBox="0 0 16 16"><path d="M1 1.5 L9 1.5 V7 H15 V15 H5.5 L1 11.5 Z" fill="#b74fa8"/><path d="M1.2 1.8 L5.7 4.8 H9 M5.7 4.8 V15" stroke="#f4dcf0" stroke-width="0.9" fill="none"/><g stroke="#7a7a7a" stroke-width="1.1"><path d="M12.5 0.3 v6 M9.5 3.3 h6 M10.4 1.2 l4.2 4.2 M14.6 1.2 l-4.2 4.2"/></g></svg>
<div class="t" style="left:82.5px;top:992.59px;font-size:12px;color:#000;letter-spacing:-0.07px;">Acoustic Pressure, 3D (actd)</div>
<svg class="a" style="left:46.0px;top:1012.2px" width="6" height="9" viewBox="0 0 6 9"><path d="M0.8 0.8 L4.3 4.3 L0.8 7.8" fill="none" stroke="#4a4a4a" stroke-width="1.15"/></svg>
<svg class="a" style="left:60px;top:1009px" width="16" height="16" viewBox="0 0 16 16"><path d="M1 1 H9 V6.5 H15 V15 H1 Z" fill="#b74fa8"/><g stroke="#7a7a7a" stroke-width="1.1"><path d="M12.5 0.3 v6 M9.5 3.3 h6 M10.4 1.2 l4.2 4.2 M14.6 1.2 l-4.2 4.2"/></g></svg>
<div class="t" style="left:82.5px;top:1010.59px;font-size:12px;color:#000;letter-spacing:-0.07px;">Acoustic Pressure (tatd)</div>
<svg class="a" style="left:46.0px;top:1030.2px" width="6" height="9" viewBox="0 0 6 9"><path d="M0.8 0.8 L4.3 4.3 L0.8 7.8" fill="none" stroke="#4a4a4a" stroke-width="1.15"/></svg>
<svg class="a" style="left:60px;top:1027px" width="16" height="16" viewBox="0 0 16 16"><path d="M1 1 H9 V6.5 H15 V15 H1 Z" fill="#b74fa8"/><g stroke="#7a7a7a" stroke-width="1.1"><path d="M12.5 0.3 v6 M9.5 3.3 h6 M10.4 1.2 l4.2 4.2 M14.6 1.2 l-4.2 4.2"/></g></svg>
<div class="t" style="left:82.5px;top:1028.59px;font-size:12px;color:#000;letter-spacing:-0.07px;">Acoustic Velocity (tatd)</div>
<svg class="a" style="left:46.0px;top:1048.2px" width="6" height="9" viewBox="0 0 6 9"><path d="M0.8 0.8 L4.3 4.3 L0.8 7.8" fill="none" stroke="#4a4a4a" stroke-width="1.15"/></svg>
<svg class="a" style="left:60px;top:1045px" width="16" height="16" viewBox="0 0 16 16"><path d="M1 1.5 L9 1.5 V7 H15 V15 H5.5 L1 11.5 Z" fill="#b74fa8"/><path d="M1.2 1.8 L5.7 4.8 H9 M5.7 4.8 V15" stroke="#f4dcf0" stroke-width="0.9" fill="none"/><g stroke="#7a7a7a" stroke-width="1.1"><path d="M12.5 0.3 v6 M9.5 3.3 h6 M10.4 1.2 l4.2 4.2 M14.6 1.2 l-4.2 4.2"/></g></svg>
<div class="t" style="left:82.5px;top:1046.59px;font-size:12px;color:#000;letter-spacing:-0.07px;">Temperature Variation (tatd)</div>
<svg class="a" style="left:46.0px;top:1066.2px" width="6" height="9" viewBox="0 0 6 9"><path d="M0.8 0.8 L4.3 4.3 L0.8 7.8" fill="none" stroke="#4a4a4a" stroke-width="1.15"/></svg>
<svg class="a" style="left:60px;top:1063px" width="16" height="16" viewBox="0 0 16 16"><g fill="#fff" stroke="#888" stroke-width="1"><path d="M4 1 H12 V10 H4 Z"/><path d="M1.5 5 L4 3 M1.5 5 V13 L5 15.5 H15.5 V12.5 H5 L1.5 10"/></g><rect x="6" y="3.5" width="8" height="8" fill="#fff" stroke="#888" stroke-width="0.9"/><text x="6.5" y="10.5" font-size="6.5" font-family="Liberation Sans" fill="#b74fa8">8</text><g stroke="#7a7a7a" stroke-width="1.1"><path d="M12.5 0.3 v6 M9.5 3.3 h6 M10.4 1.2 l4.2 4.2 M14.6 1.2 l-4.2 4.2"/></g></svg>
<div class="t" style="left:82.5px;top:1064.59px;font-size:12px;color:#000;letter-spacing:-0.07px;">Evaluation Group 1</div>
<svg class="a" style="left:45.0px;top:1086px" width="9" height="6" viewBox="0 0 9 6"><path d="M0.5 0.5 L4.2 4.4 L7.9 0.5" fill="none" stroke="#111" stroke-width="1.2"/></svg>
<svg class="a" style="left:60px;top:1081px" width="16" height="16" viewBox="0 0 16 16"><path d="M1 1 H11 L15.5 5 V16 H5 L1 12.5 Z" fill="#b74fa8"/><path d="M1.3 1.3 L5 5 H15.5 M5 5 V16" stroke="#f4dcf0" stroke-width="0.9" fill="none"/><path d="M7 7.5 H13 M7 10 H12 M3 4 L3 10" stroke="#f4dcf0" stroke-width="0.8"/></svg>
<div class="t" style="left:82.5px;top:1082.59px;font-size:12px;color:#000;letter-spacing:-0.07px;">Export</div>
</div>
<div class="t" style="left:575px;top:12.22px;font-size:21px;color:#2f5fa8;">Settings</div>
<div class="t" style="left:574.5px;top:38.78px;font-size:13.25px;color:#2f5fa8;">Thermoviscous Acoustics Model</div>
<div class="t" style="left:574.5px;top:72.84px;font-size:12px;color:#000;">Label:</div>
<div class="a" style="left:615px;top:70px;width:632px;height:18px;background:#fff;border:1px solid #d4d4d4;"></div>
<div class="t" style="left:617.5px;top:72.84px;font-size:12px;color:#000;">Thermoviscous Acoustics Model 2 (air)</div>
<div class="a" style="left:1253px;top:68px;width:21px;height:22px;background:#ececec;border:1px solid #dcdcdc;border-radius:3px;"></div>
<svg class="a" style="left:1257px;top:72px" width="14" height="14" viewBox="0 0 14 14"><rect x="1.5" y="1.5" width="11" height="11" fill="#fff" stroke="#555" stroke-width="1.1"/><rect x="1.5" y="1.5" width="11" height="2.2" fill="#999"/><path d="M5 6 H11 M5 8.5 H11" stroke="#19a28a" stroke-width="1"/><path d="M0.5 13.5 L4 10 M2 10 H4 V12" stroke="#19a28a" stroke-width="1.4" fill="none"/></svg>
<div class="a" style="left:569px;top:99px;width:710px;height:1px;background:#dde0e4;"></div>
<svg class="a" style="left:575.5px;top:111.5px" width="8" height="5" viewBox="0 0 8 5"><path d="M1 0.8 L4 4 L7 0.8" fill="none" stroke="#2f5596" stroke-width="1.2"/></svg>
<div class="t" style="left:595.5px;top:107.00px;font-size:13px;color:#2f5fa8;">Domain Selection</div>
<div class="t" style="left:574px;top:140.84px;font-size:12px;color:#000;">Selection:</div>
<div class="a" style="left:635px;top:135px;width:639px;height:21px;background:linear-gradient(#f3f3f3,#e9e9e9);border:1px solid #d6d6d6;border-radius:3px;"></div>
<svg class="a" style="left:1260px;top:144px" width="8" height="4" viewBox="0 0 8 4"><path d="M0 0 H7.5 L3.75 4 Z" fill="#000"/></svg>
<div class="a" style="left:648px;top:139px;width:17px;height:12px;background:#3a8fd6;border-radius:4px;"></div>
<div class="t" style="left:667.5px;top:139.84px;font-size:12px;color:#000;">Manual</div>
<div class="a" style="left:573px;top:162px;width:40px;height:40px;background:#cfe6fa;border:1px solid #a9d1f3;border-radius:3px;"></div>
<svg class="a" style="left:578px;top:175px" width="31" height="15" viewBox="0 0 31 15"><rect x="0.5" y="0.5" width="29" height="13" rx="1" fill="#e6e6e6" stroke="#3d4a5c" stroke-width="1.1"/><rect x="3" y="4" width="16" height="6.5" rx="3" fill="#4aa84a"/><rect x="18.5" y="2.5" width="9" height="9" fill="#b4b4b4" stroke="#3d4a5c" stroke-width="1"/></svg>
<div class="a" style="left:620px;top:162px;width:596px;height:120px;background:#f9fafd;border:1px solid #d2d2d2;border-bottom:2px solid #c4c4c4;"></div>
<div class="t" style="left:627px;top:167.84px;font-size:12px;color:#000;">3</div>
<svg class="a" style="left:1230px;top:163px" width="16" height="16" viewBox="0 0 16 16"><g fill="#eee" stroke="#888" stroke-width="0.9"><path d="M1 3 L3 1 H6 L7 2 V5 L5 7 H2 L1 6 Z"/><path d="M5 7 L7 5 H10 L11 6 V9 L9 11 H6 L5 10 Z"/></g><path d="M9 11 L11 9 H14 L15 10 V14 L13 16 H10 L9 15 Z" fill="#3a8fd6"/></svg>
<svg class="a" style="left:1230px;top:182px" width="16" height="16" viewBox="0 0 16 16"><rect x="0.5" y="0.5" width="9" height="11" fill="#fff" stroke="#888"/><rect x="5" y="3.5" width="10" height="12" fill="#fff" stroke="#2f8ad4" stroke-width="1.2"/><path d="M7.5 7 H12.5 M7.5 9.5 H12.5 M7.5 12 H12.5" stroke="#2f8ad4" stroke-width="1"/></svg>
<svg class="a" style="left:1230px;top:202px" width="16" height="16" viewBox="0 0 16 16"><rect x="1" y="2.5" width="10" height="11" rx="1.5" fill="#ddd" stroke="#888"/><rect x="3.5" y="0.5" width="5" height="3" rx="1" fill="#eee" stroke="#888"/><rect x="7" y="6.5" width="8" height="9" fill="#fff" stroke="#2f8ad4" stroke-width="1.2"/></svg>
<svg class="a" style="left:1230px;top:222px" width="16" height="16" viewBox="0 0 16 16"><rect x="3.5" y="3.5" width="9" height="9" fill="none" stroke="#777" stroke-width="1"/><path d="M8 5.5 V10.5 M5.5 8 H10.5" stroke="#777"/><path d="M8 0 L10 2 H6 Z M8 16 L10 14 H6 Z M0 8 L2 6 V10 Z M16 8 L14 6 V10 Z" fill="#2f8ad4"/></svg>
<svg class="a" style="left:1258px;top:162px" width="16" height="16" viewBox="0 0 16 16"><path d="M8 1 V14 M1.5 7.5 H14.5" stroke="#8a8a8a" stroke-width="1.1"/></svg>
<svg class="a" style="left:1258px;top:182px" width="16" height="16" viewBox="0 0 16 16"><path d="M1.5 7.5 H14.5" stroke="#2f8ad4" stroke-width="1.2"/></svg>
<svg class="a" style="left:1258px;top:202px" width="16" height="16" viewBox="0 0 16 16"><rect x="1.5" y="1.5" width="13" height="13" fill="none" stroke="#2f8ad4" stroke-width="1.1" stroke-dasharray="2 1.5"/><path d="M6 4 L14 4 L14 12 Z" fill="#2f8ad4"/><path d="M1 0 L5 7" stroke="#555" stroke-width="1"/><path d="M4 6 L9 12 L6 15 L2 9 Z" fill="#f0a848"/></svg>
<svg class="a" style="left:1258px;top:222px" width="16" height="16" viewBox="0 0 16 16"><rect x="0.5" y="1" width="2" height="2" fill="#2f8ad4"/><rect x="4" y="1" width="11" height="2" fill="#2f8ad4"/><path d="M2 10.5 Q8 5 14 10.5 Q8 16 2 10.5 Z" fill="none" stroke="#2f8ad4" stroke-width="1.3"/><circle cx="8" cy="10.5" r="1.8" fill="#2f8ad4"/></svg>
<div class="a" style="left:569px;top:293px;width:710px;height:1px;background:#dde0e4;"></div>
<svg class="a" style="left:577px;top:303px" width="5" height="9" viewBox="0 0 5 9"><path d="M0.8 0.8 L4 4.5 L0.8 8.2" fill="none" stroke="#000" stroke-width="1.3"/></svg>
<div class="t" style="left:595.5px;top:301.00px;font-size:13px;color:#2f5fa8;">Override and Contribution</div>
<div class="a" style="left:569px;top:322px;width:710px;height:1px;background:#dde0e4;"></div>
<svg class="a" style="left:577px;top:332px" width="5" height="9" viewBox="0 0 5 9"><path d="M0.8 0.8 L4 4.5 L0.8 8.2" fill="none" stroke="#000" stroke-width="1.3"/></svg>
<div class="t" style="left:595.5px;top:330.00px;font-size:13px;color:#2f5fa8;">Equation</div>
<div class="a" style="left:569px;top:351px;width:710px;height:1px;background:#dde0e4;"></div>
<svg class="a" style="left:575.5px;top:363.5px" width="8" height="5" viewBox="0 0 8 5"><path d="M1 0.8 L4 4 L7 0.8" fill="none" stroke="#2f5596" stroke-width="1.2"/></svg>
<div class="t" style="left:595.5px;top:359.00px;font-size:13px;color:#2f5fa8;">Model Input</div>
<svg class="a" style="left:1258px;top:357px" width="16" height="16" viewBox="0 0 16 16"><g fill="none" stroke="#999" stroke-width="1"><rect x="0.5" y="3.5" width="12" height="12"/><path d="M0.5 7.5 H12.5 M0.5 11.5 H12.5 M4.5 3.5 V15.5 M8.5 3.5 V15.5"/></g><path d="M5 12 L13 1.5 L16 4 L8 14 L4.5 15 Z" fill="#3c78c0"/></svg>
<div class="t" style="left:574px;top:388.84px;font-size:12px;color:#000;">Equilibrium pressure:</div>
<div class="t" style="left:576px;top:410.00px;font-size:13px;color:#000;font-style:italic;">p</div>
<div class="t" style="left:585.5px;top:416.37px;font-size:10.2px;color:#000;">0</div>
<div class="a" style="left:603px;top:409px;width:615px;height:21px;background:linear-gradient(#f3f3f3,#e9e9e9);border:1px solid #d6d6d6;border-radius:3px;"></div>
<svg class="a" style="left:1204px;top:418px" width="8" height="4" viewBox="0 0 8 4"><path d="M0 0 H7.5 L3.75 4 Z" fill="#000"/></svg>
<div class="t" style="left:616.5px;top:413.84px;font-size:12px;color:#000;">User defined</div>
<div class="a" style="left:1226px;top:409px;width:20px;height:21px;background:#f3f3f4;border:1px solid #e4e4e6;border-radius:3px;"></div>
<svg class="a" style="left:1229px;top:412px" width="14" height="14" viewBox="0 0 14 14"><path d="M1 2 H7 M1 4.5 H5 M1 7 H6 M1 9.5 H5 M1 12 H7" stroke="#bcbcbc" stroke-width="1"/><path d="M8.5 6.5 H12.5 V12.5 H8" fill="none" stroke="#bcbcbc"/><path d="M8 4.5 L10.5 6.5 L8 8.5 Z" fill="#bcbcbc"/></svg>
<div class="a" style="left:1254px;top:409px;width:20px;height:21px;background:#f3f3f4;border:1px solid #e4e4e6;border-radius:3px;"></div>
<svg class="a" style="left:1257px;top:412px" width="14" height="14" viewBox="0 0 14 14"><g fill="#c4c4c4"><rect x="1" y="5" width="3.5" height="3.5"/><rect x="5.5" y="2" width="3.5" height="3.5"/><rect x="5.5" y="6.5" width="3.5" height="3.5"/><rect x="1" y="10" width="3.5" height="3.5"/><rect x="5.5" y="11" width="3.5" height="3"/><rect x="10" y="8" width="3.5" height="3.5"/><path d="M10 0.5 L14 3 L10 5.5 Z"/></g></svg>
<div class="a" style="left:603px;top:436px;width:648px;height:18px;background:#fff;border:1px solid #d4d4d4;"></div>
<div class="t" style="left:606px;top:438.84px;font-size:12px;color:#000;">PABubble</div>
<div class="t" style="left:1261px;top:438.84px;font-size:12px;color:#000;">Pa</div>
<div class="t" style="left:574px;top:462.84px;font-size:12px;color:#000;">Equilibrium temperature:</div>
<div class="t" style="left:576px;top:483.42px;font-size:12.5px;color:#000;font-style:italic;">T</div>
<div class="t" style="left:585px;top:489.37px;font-size:10.2px;color:#000;">0</div>
<div class="a" style="left:603px;top:482px;width:615px;height:21px;background:linear-gradient(#f3f3f3,#e9e9e9);border:1px solid #d6d6d6;border-radius:3px;"></div>
<svg class="a" style="left:1204px;top:491px" width="8" height="4" viewBox="0 0 8 4"><path d="M0 0 H7.5 L3.75 4 Z" fill="#000"/></svg>
<div class="t" style="left:616.5px;top:486.84px;font-size:12px;color:#000;">User defined</div>
<div class="a" style="left:1226px;top:482px;width:20px;height:21px;background:#f3f3f4;border:1px solid #e4e4e6;border-radius:3px;"></div>
<svg class="a" style="left:1229px;top:485px" width="14" height="14" viewBox="0 0 14 14"><path d="M1 2 H7 M1 4.5 H5 M1 7 H6 M1 9.5 H5 M1 12 H7" stroke="#bcbcbc" stroke-width="1"/><path d="M8.5 6.5 H12.5 V12.5 H8" fill="none" stroke="#bcbcbc"/><path d="M8 4.5 L10.5 6.5 L8 8.5 Z" fill="#bcbcbc"/></svg>
<div class="a" style="left:1254px;top:482px;width:20px;height:21px;background:#f3f3f4;border:1px solid #e4e4e6;border-radius:3px;"></div>
<svg class="a" style="left:1257px;top:485px" width="14" height="14" viewBox="0 0 14 14"><g fill="#c4c4c4"><rect x="1" y="5" width="3.5" height="3.5"/><rect x="5.5" y="2" width="3.5" height="3.5"/><rect x="5.5" y="6.5" width="3.5" height="3.5"/><rect x="1" y="10" width="3.5" height="3.5"/><rect x="5.5" y="11" width="3.5" height="3"/><rect x="10" y="8" width="3.5" height="3.5"/><path d="M10 0.5 L14 3 L10 5.5 Z"/></g></svg>
<div class="a" style="left:603px;top:509px;width:654px;height:18px;background:#fff;border:1px solid #d4d4d4;"></div>
<div class="t" style="left:606px;top:511.84px;font-size:12px;color:#000;">293.15[K]</div>
<div class="t" style="left:1267px;top:511.84px;font-size:12px;color:#000;">K</div>
<div class="a" style="left:569px;top:538px;width:710px;height:1px;background:#dde0e4;"></div>
<svg class="a" style="left:575.5px;top:549.5px" width="8" height="5" viewBox="0 0 8 5"><path d="M1 0.8 L4 4 L7 0.8" fill="none" stroke="#2f5596" stroke-width="1.2"/></svg>
<div class="t" style="left:595.5px;top:545.00px;font-size:13px;color:#2f5fa8;">Fluid Properties</div>
<div class="t" style="left:574px;top:575.84px;font-size:12px;color:#000;">Equilibrium density:</div>
<div class="a" style="left:648px;top:595px;width:626px;height:21px;background:linear-gradient(#f3f3f3,#e9e9e9);border:1px solid #d6d6d6;border-radius:3px;"></div>
<svg class="a" style="left:1260px;top:604px" width="8" height="4" viewBox="0 0 8 4"><path d="M0 0 H7.5 L3.75 4 Z" fill="#000"/></svg>
<div class="t" style="left:661px;top:599.84px;font-size:12px;color:#000;">From material</div>
<div class="t" style="left:575.5px;top:596.88px;font-size:15.5px;color:#000;font-style:italic;">ρ</div>
<div class="t" style="left:585.5px;top:605.37px;font-size:10.2px;color:#000;">0</div>
<div class="t" style="left:591.5px;top:598.73px;font-size:14.5px;color:#000;font-weight:300;">(</div>
<div class="t" style="left:597px;top:599.00px;font-size:13px;color:#000;font-style:italic;">p</div>
<div class="t" style="left:606px;top:605.37px;font-size:10.2px;color:#000;">0</div>
<div class="t" style="left:612px;top:601.00px;font-size:13px;color:#000;font-style:italic;">,</div>
<div class="t" style="left:615.5px;top:599.42px;font-size:12.5px;color:#000;font-style:italic;">T</div>
<div class="t" style="left:625px;top:605.37px;font-size:10.2px;color:#000;">0</div>
<div class="t" style="left:631px;top:598.73px;font-size:14.5px;color:#000;font-weight:300;">)</div>
<div class="t" style="left:574px;top:623.84px;font-size:12px;color:#000;">Dynamic viscosity:</div>
<div class="a" style="left:648px;top:643px;width:626px;height:21px;background:linear-gradient(#f3f3f3,#e9e9e9);border:1px solid #d6d6d6;border-radius:3px;"></div>
<svg class="a" style="left:1260px;top:652px" width="8" height="4" viewBox="0 0 8 4"><path d="M0 0 H7.5 L3.75 4 Z" fill="#000"/></svg>
<div class="t" style="left:661px;top:647.84px;font-size:12px;color:#000;">From material</div>
<div class="t" style="left:575.5px;top:641.88px;font-size:15.5px;color:#000;font-style:italic;">μ</div>
<div class="t" style="left:574px;top:671.84px;font-size:12px;color:#000;">Bulk viscosity:</div>
<div class="a" style="left:648px;top:691px;width:626px;height:21px;background:linear-gradient(#f3f3f3,#e9e9e9);border:1px solid #d6d6d6;border-radius:3px;"></div>
<svg class="a" style="left:1260px;top:700px" width="8" height="4" viewBox="0 0 8 4"><path d="M0 0 H7.5 L3.75 4 Z" fill="#000"/></svg>
<div class="t" style="left:661px;top:695.84px;font-size:12px;color:#000;">From material</div>
<div class="t" style="left:575.5px;top:689.88px;font-size:15.5px;color:#000;font-style:italic;">μ</div>
<div class="t" style="left:587px;top:698.37px;font-size:10.2px;color:#000;">B</div>
<div class="t" style="left:574px;top:719.84px;font-size:12px;color:#8c8c8c;">Thermal conductivity:</div>
<div class="a" style="left:648px;top:739px;width:626px;height:21px;background:#f2f2f2;border:1px solid #e6e6e6;border-radius:3px;"></div>
<svg class="a" style="left:1260px;top:748px" width="8" height="4" viewBox="0 0 8 4"><path d="M0 0 H7.5 L3.75 4 Z" fill="#d8d8d8"/></svg>
<div class="t" style="left:661px;top:743.84px;font-size:12px;color:#a0a0a0;">From material</div>
<div class="t" style="left:576px;top:744.00px;font-size:13px;color:#8c8c8c;font-style:italic;">k</div>
<div class="t" style="left:574px;top:767.84px;font-size:12px;color:#000;">Heat capacity at constant pressure:</div>
<div class="a" style="left:648px;top:787px;width:626px;height:21px;background:linear-gradient(#f3f3f3,#e9e9e9);border:1px solid #d6d6d6;border-radius:3px;"></div>
<svg class="a" style="left:1260px;top:796px" width="8" height="4" viewBox="0 0 8 4"><path d="M0 0 H7.5 L3.75 4 Z" fill="#000"/></svg>
<div class="t" style="left:661px;top:791.84px;font-size:12px;color:#000;">From material</div>
<div class="t" style="left:576px;top:788.42px;font-size:12.5px;color:#000;font-style:italic;">C</div>
<div class="t" style="left:586px;top:794.37px;font-size:10.2px;color:#000;font-style:italic;">p</div>
<div class="a" style="left:569px;top:819px;width:710px;height:1px;background:#dde0e4;"></div>
<svg class="a" style="left:575.5px;top:831.0px" width="8" height="5" viewBox="0 0 8 5"><path d="M1 0.8 L4 4 L7 0.8" fill="none" stroke="#2f5596" stroke-width="1.2"/></svg>
<div class="t" style="left:595.5px;top:826.50px;font-size:13px;color:#2f5fa8;">Thermal Expansion and Compressibility</div>
<div class="t" style="left:574px;top:857.34px;font-size:12px;color:#000;">Coefficient of thermal expansion:</div>
<div class="a" style="left:604px;top:876.5px;width:670px;height:21px;background:linear-gradient(#f3f3f3,#e9e9e9);border:1px solid #d6d6d6;border-radius:3px;"></div>
<svg class="a" style="left:1260px;top:885.5px" width="8" height="4" viewBox="0 0 8 4"><path d="M0 0 H7.5 L3.75 4 Z" fill="#000"/></svg>
<div class="t" style="left:617px;top:881.34px;font-size:12px;color:#000;">From material</div>
<div class="t" style="left:575.5px;top:874.88px;font-size:15.5px;color:#000;font-style:italic;">α</div>
<div class="t" style="left:586px;top:883.37px;font-size:10.2px;color:#000;">p</div>
<div class="t" style="left:574px;top:905.34px;font-size:12px;color:#000;">Isothermal compressibility:</div>
<div class="a" style="left:604px;top:924.5px;width:670px;height:21px;background:linear-gradient(#f3f3f3,#e9e9e9);border:1px solid #d6d6d6;border-radius:3px;"></div>
<svg class="a" style="left:1260px;top:933.5px" width="8" height="4" viewBox="0 0 8 4"><path d="M0 0 H7.5 L3.75 4 Z" fill="#000"/></svg>
<div class="t" style="left:617px;top:929.34px;font-size:12px;color:#000;">From speed of sound</div>
<div class="t" style="left:575.5px;top:923.88px;font-size:15.5px;color:#000;font-style:italic;">β</div>
<div class="t" style="left:586px;top:933.37px;font-size:10.2px;color:#000;">T</div>
<div class="t" style="left:574px;top:953.34px;font-size:12px;color:#000;">Speed of sound:</div>
<div class="a" style="left:604px;top:972.5px;width:670px;height:21px;background:linear-gradient(#f3f3f3,#e9e9e9);border:1px solid #d6d6d6;border-radius:3px;"></div>
<svg class="a" style="left:1260px;top:981.5px" width="8" height="4" viewBox="0 0 8 4"><path d="M0 0 H7.5 L3.75 4 Z" fill="#000"/></svg>
<div class="t" style="left:617px;top:977.34px;font-size:12px;color:#000;">From material</div>
<div class="t" style="left:576px;top:975.42px;font-size:12.5px;color:#000;font-style:italic;">c</div>
<div class="t" style="left:574px;top:1001.34px;font-size:12px;color:#000;">Ratio of specific heats:</div>
<div class="a" style="left:604px;top:1020.5px;width:670px;height:21px;background:linear-gradient(#f3f3f3,#e9e9e9);border:1px solid #d6d6d6;border-radius:3px;"></div>
<svg class="a" style="left:1260px;top:1029.5px" width="8" height="4" viewBox="0 0 8 4"><path d="M0 0 H7.5 L3.75 4 Z" fill="#000"/></svg>
<div class="t" style="left:617px;top:1025.34px;font-size:12px;color:#000;">From material</div>
<div class="t" style="left:575.5px;top:1017.88px;font-size:15.5px;color:#000;font-style:italic;">γ</div>
<div class="t" style="left:1298.5px;top:12.16px;font-size:12.8px;color:#2f5fa8;">Graphics</div>
<div class="t" style="left:1376px;top:12.16px;font-size:12.8px;color:#333;">Probe Plot 1</div>
<svg class="a" style="left:1456px;top:13.5px" width="9" height="9" viewBox="0 0 9 9"><path d="M0.5 0.5 L8.5 8.5 M8.5 0.5 L0.5 8.5" stroke="#bcc0c8" stroke-width="1.25"/></svg>
<div class="t" style="left:1495px;top:12.16px;font-size:12.8px;color:#333;">Convergence Plot 1</div>
<svg class="a" style="left:1616px;top:13.5px" width="9" height="9" viewBox="0 0 9 9"><path d="M0.5 0.5 L8.5 8.5 M8.5 0.5 L0.5 8.5" stroke="#bcc0c8" stroke-width="1.25"/></svg>
<div class="t" style="left:1655px;top:12.16px;font-size:12.8px;color:#333;">Function Plot</div>
<svg class="a" style="left:1737px;top:13.5px" width="9" height="9" viewBox="0 0 9 9"><path d="M0.5 0.5 L8.5 8.5 M8.5 0.5 L0.5 8.5" stroke="#bcc0c8" stroke-width="1.25"/></svg>
<div class="a" style="left:1286px;top:33px;width:1269px;height:1px;background:#d6d8dc;"></div>
<div class="a" style="left:1294px;top:31px;width:59px;height:2px;background:#2a7fd0;"></div>
<svg class="a" style="left:1294px;top:38px" width="14" height="14" viewBox="0 0 14 14"><circle cx="5.5" cy="5.5" r="4.6" fill="none" stroke="#3a8fd6" stroke-width="1.4"/><path d="M9 9 L13 13" stroke="#3a8fd6" stroke-width="2"/><path d="M5.5 3 V8 M3 5.5 H8" stroke="#3a8fd6" stroke-width="1.1"/></svg>
<svg class="a" style="left:1317px;top:38px" width="14" height="14" viewBox="0 0 14 14"><circle cx="5.5" cy="5.5" r="4.6" fill="none" stroke="#3a8fd6" stroke-width="1.4"/><path d="M9 9 L13 13" stroke="#3a8fd6" stroke-width="2"/><path d="M3 5.5 H8" stroke="#3a8fd6" stroke-width="1.1"/></svg>
<svg class="a" style="left:1339px;top:38px" width="17" height="14" viewBox="0 0 17 14"><rect x="0.5" y="5.5" width="8" height="7.5" fill="none" stroke="#3a8fd6" stroke-width="1" stroke-dasharray="2 1.2"/><circle cx="9" cy="5" r="4.3" fill="none" stroke="#3a8fd6" stroke-width="1.3"/><path d="M12 8 L15.5 12" stroke="#3a8fd6" stroke-width="1.8"/><path d="M9 3 V7 M7 5 H11" stroke="#3a8fd6" stroke-width="1"/></svg>
<svg class="a" style="left:1361px;top:43px" width="8" height="5" viewBox="0 0 8 5"><path d="M0 0 H7.5 L3.75 4 Z" fill="#000"/></svg>
<svg class="a" style="left:1380px;top:37px" width="16" height="16" viewBox="0 0 16 16"><rect x="3.5" y="3.5" width="9" height="9" fill="none" stroke="#777"/><path d="M8 5.5 V10.5 M5.5 8 H10.5" stroke="#777"/><path d="M8 0.5 L9.8 2.3 H6.2 Z M8 15.5 L9.8 13.7 H6.2 Z M0.5 8 L2.3 6.2 V9.8 Z M15.5 8 L13.7 6.2 V9.8 Z" fill="#3a8fd6"/></svg>
<svg class="a" style="left:1403px;top:37px" width="16" height="16" viewBox="0 0 16 16"><rect x="0.7" y="0.7" width="14.6" height="14.6" fill="none" stroke="#6a6a6a" stroke-width="1.3"/><path d="M8 5.5 V10.5 M5.5 8 H10.5" stroke="#777"/><path d="M8 1.5 L10 3.8 H6 Z M8 14.5 L10 12.2 H6 Z M1.5 8 L3.8 6 V10 Z M14.5 8 L12.2 6 V10 Z" fill="#3a8fd6"/></svg>
<div class="a" style="left:1426px;top:37px;width:1px;height:16px;background:#d0d0d0;"></div>
<svg class="a" style="left:1434px;top:37px" width="17" height="16" viewBox="0 0 17 16"><path d="M8 15 V2" stroke="#3a8fd6" stroke-width="1.1"/><path d="M6.5 3 L8 0.5 L9.5 3 Z" fill="#3a8fd6"/><path d="M8 15 L2 9" stroke="#3aa348" stroke-width="1.1"/><path d="M1 8 L4 8.5 L2.5 11 Z" fill="#3aa348"/><path d="M8 15 L15 11" stroke="#e03060" stroke-width="1.1"/><path d="M16 10.5 L13.5 10 L14.5 13 Z" fill="#e03060"/></svg>
<svg class="a" style="left:1456px;top:43px" width="8" height="5" viewBox="0 0 8 5"><path d="M0 0 H7.5 L3.75 4 Z" fill="#000"/></svg>
<div class="a" style="left:1475px;top:37px;width:1px;height:16px;background:#d0d0d0;"></div>
<svg class="a" style="left:1483px;top:39px" width="16" height="12" viewBox="0 0 16 12"><rect x="0" y="0" width="16" height="12" rx="3.5" fill="#3a8fd6"/></svg>
<svg class="a" style="left:1505px;top:43px" width="8" height="5" viewBox="0 0 8 5"><path d="M0 0 H7.5 L3.75 4 Z" fill="#000"/></svg>
<div class="a" style="left:1524px;top:37px;width:1px;height:16px;background:#d0d0d0;"></div>
<svg class="a" style="left:1532px;top:37px" width="16" height="14" viewBox="0 0 16 14"><rect x="0.5" y="3.5" width="15" height="9.5" rx="3" fill="#ddd" stroke="#8a8a8a"/><path d="M0.5 8 H15.5" stroke="#999" stroke-width="0.8"/><rect x="5" y="0.5" width="8" height="7" fill="#f9fafd" stroke="#3a8fd6" stroke-dasharray="1.6 1"/><rect x="6.5" y="2" width="5" height="4" fill="#3a8fd6"/></svg>
<svg class="a" style="left:1554px;top:43px" width="8" height="5" viewBox="0 0 8 5"><path d="M0 0 H7.5 L3.75 4 Z" fill="#000"/></svg>
<svg class="a" style="left:1573px;top:37px" width="16" height="14" viewBox="0 0 16 14"><rect x="0" y="3" width="16" height="11" rx="3.5" fill="#3a8fd6"/><rect x="5" y="0.5" width="8" height="7" fill="#ddd" stroke="#f9fafd" stroke-width="1" stroke-dasharray="1.6 1"/></svg>
<svg class="a" style="left:1595px;top:43px" width="8" height="5" viewBox="0 0 8 5"><path d="M0 0 H7.5 L3.75 4 Z" fill="#000"/></svg>
<svg class="a" style="left:1615px;top:37px" width="16" height="16" viewBox="0 0 16 16"><rect x="0.5" y="0.5" width="13" height="13" fill="none" stroke="#3a8fd6" stroke-dasharray="2 1.2"/><rect x="3" y="3" width="7" height="7" fill="#3a8fd6"/><path d="M8 8 L15 15 M8 8 H12 M8 8 V12" stroke="#3a8fd6" stroke-width="1.4"/></svg>
<svg class="a" style="left:1638px;top:37px" width="15" height="16" viewBox="0 0 15 16"><rect x="1.5" y="1.5" width="13" height="13" fill="none" stroke="#3a8fd6" stroke-dasharray="2 1.2"/><path d="M5 3 L13 3 L13 12 Z" fill="#3a8fd6"/><path d="M1 0 L5 7" stroke="#555" stroke-width="1"/><path d="M4 6 L9 12 L6 15.5 L1.5 9 Z" fill="#f0a848"/></svg>
<div class="a" style="left:1660px;top:37px;width:1px;height:16px;background:#d0d0d0;"></div>
<svg class="a" style="left:1669px;top:38px" width="15" height="13" viewBox="0 0 15 13"><path d="M1 6.5 Q7.5 -0.5 14 6.5 Q7.5 13.5 1 6.5 Z" fill="none" stroke="#3a8fd6" stroke-width="1.3"/><path d="M2 1 L13 12" stroke="#3a8fd6" stroke-width="1.3"/></svg>
<svg class="a" style="left:1691px;top:37px" width="16" height="16" viewBox="0 0 16 16"><path d="M5 3 A4 4 0 1 1 8 10" fill="none" stroke="#3a8fd6" stroke-width="1.3"/><path d="M3 0.5 L6.5 3 L3 5.5 Z" fill="#3a8fd6"/><ellipse cx="4" cy="13" rx="3.2" ry="1.8" fill="#3a8fd6"/><ellipse cx="12" cy="13.5" rx="3" ry="1.6" fill="none" stroke="#3a8fd6" stroke-width="0.9"/></svg>
<svg class="a" style="left:1714px;top:37px" width="17" height="15" viewBox="0 0 17 15"><rect x="0.7" y="0.7" width="15" height="13" fill="none" stroke="#3a8fd6" stroke-width="1.3"/><path d="M0.7 3 H15.7" stroke="#3a8fd6" stroke-width="1"/><path d="M3.5 8.5 Q8 4.5 12.5 8.5 Q8 12 3.5 8.5 Z" fill="none" stroke="#3a8fd6" stroke-width="1.1"/><circle cx="8" cy="8.3" r="1.5" fill="#3a8fd6"/></svg>
<svg class="a" style="left:1736px;top:43px" width="8" height="5" viewBox="0 0 8 5"><path d="M0 0 H7.5 L3.75 4 Z" fill="#000"/></svg>
<div class="a" style="left:1755px;top:37px;width:1px;height:16px;background:#d0d0d0;"></div>
<div class="a" style="left:1761px;top:35px;width:21px;height:20px;background:#cfe6fa;border:1px solid #a9d1f3;border-radius:3px;"></div>
<svg class="a" style="left:1763px;top:38px" width="16" height="14" viewBox="0 0 16 14"><rect x="0.8" y="0.8" width="14" height="12.5" fill="#fff" stroke="#555" stroke-width="1.4"/><g fill="#3a8fd6"><rect x="3.0" y="3.0" width="2.6" height="2.2"/><rect x="3.0" y="6.2" width="2.6" height="2.2"/><rect x="3.0" y="9.4" width="2.6" height="2.2"/><rect x="6.7" y="3.0" width="2.6" height="2.2"/><rect x="6.7" y="6.2" width="2.6" height="2.2"/><rect x="6.7" y="9.4" width="2.6" height="2.2"/><rect x="10.4" y="3.0" width="2.6" height="2.2"/><rect x="10.4" y="6.2" width="2.6" height="2.2"/><rect x="10.4" y="9.4" width="2.6" height="2.2"/></g></svg>
<div class="a" style="left:1786px;top:37px;width:1px;height:16px;background:#d0d0d0;"></div>
<svg class="a" style="left:1794px;top:37px" width="15" height="17" viewBox="0 0 15 17"><path d="M0.5 1 H10 L14 4 V8 H4 L0.5 5 Z" fill="#eee" stroke="#888" stroke-width="0.9"/><rect x="3.5" y="3.8" width="10.5" height="4.5" fill="#5aa8e6" stroke="#3a8fd6" stroke-width="0.8"/><circle cx="8" cy="12.5" r="3.2" fill="none" stroke="#e0305a" stroke-width="1.4"/><path d="M6 14.5 L10 10.5" stroke="#e0305a" stroke-width="1.4"/></svg>
<svg class="a" style="left:1818px;top:37px" width="15" height="16" viewBox="0 0 15 16"><path d="M8 1 C13 1 15 6 14 10 C13 14 8 13 6 15 C3 16 0 14 1 10 C2 7 4 6 3 4 C3 2 5 1 8 1 Z" fill="#e6e6e6" stroke="#777" stroke-width="1"/><circle cx="6" cy="5" r="1.5" fill="#fff" stroke="#888"/><circle cx="10.5" cy="4" r="1.2" fill="#8ac4ee"/><path d="M10.5 6.5 L12 8 L10.5 9.5 L9 8 Z" fill="#3a8fd6"/><path d="M9 10 L10.5 11.5 L9 13 L7.5 11.5 Z" fill="#f09030"/><path d="M5 12 L6.5 13.5 L5 15 L3.5 13.5 Z" fill="#e03060"/></svg>
<svg class="a" style="left:1838px;top:43px" width="8" height="5" viewBox="0 0 8 5"><path d="M0 0 H7.5 L3.75 4 Z" fill="#000"/></svg>
<div class="a" style="left:1857px;top:37px;width:1px;height:16px;background:#d0d0d0;"></div>
<svg class="a" style="left:1866px;top:38px" width="15" height="15" viewBox="0 0 15 15"><g fill="#3a8fd6"><path d="M7.5 0 A7.5 7.5 0 0 1 14.5 5.5 L9 5.5 Z"/><path d="M14.8 7 A7.5 7.5 0 0 1 11 14 L8.5 9.5 Z"/><path d="M9.5 14.8 A7.5 7.5 0 0 1 2 12.5 L6.5 10 Z"/><path d="M1 11 A7.5 7.5 0 0 1 1 4 L5.5 6.5 Z"/><path d="M2 2.5 A7.5 7.5 0 0 1 6 0.2 L6 5 Z"/></g></svg>
<svg class="a" style="left:1887px;top:43px" width="8" height="5" viewBox="0 0 8 5"><path d="M0 0 H7.5 L3.75 4 Z" fill="#000"/></svg>
<svg class="a" style="left:1906px;top:39px" width="16" height="12" viewBox="0 0 16 12"><rect x="0" y="2" width="16" height="10" fill="#3a8fd6"/><rect x="4" y="0" width="7" height="3" fill="#3a8fd6"/><circle cx="8.3" cy="6.8" r="2.8" fill="none" stroke="#fff" stroke-width="1.2"/><rect x="1" y="3" width="1.5" height="1.2" fill="#fff"/></svg>
<svg class="a" style="left:1930px;top:37px" width="15" height="16" viewBox="0 0 15 16"><rect x="3" y="0.7" width="9" height="4" fill="none" stroke="#3a8fd6" stroke-width="1.2"/><rect x="0.6" y="4.5" width="13.8" height="7" rx="1.5" fill="#a8c8e6" stroke="#3a8fd6" stroke-width="1.2"/><rect x="3" y="9" width="9" height="6.3" fill="#fff" stroke="#3a8fd6" stroke-width="1.2"/></svg>
<div class="a" style="left:1286px;top:58px;width:1270px;height:888px;background:#fff;"></div>
<svg class="a" style="left:0;top:0" width="2555" height="1200"><path d="M1426.00 214.82 A302.50 302.68 0 0 1 1426.00 820.18 Z" fill="#c8c8c8" stroke="#111" stroke-width="1"/><path d="M1426.00 327.89 A189.50 189.61 0 0 1 1426.00 707.11" fill="none" stroke="#111" stroke-width="1.1"/><path d="M1463.60 517.5 H1728.50" stroke="#000" stroke-width="1"/><path d="M1426.00 479.88 A37.60 37.62 0 0 1 1426.00 555.12 Z" fill="#b4b4f0" stroke="#0000ff" stroke-width="2"/><path d="M1425.8 66 V923" stroke="#c6c6c6" stroke-width="1.8" stroke-dasharray="15 3.3 1.5 2.4" stroke-dashoffset="16.4"/><path d="M1425.6 214.8 V479.9" stroke="#b0b0b0" stroke-width="1.6"/><path d="M1425.6 555.1 V820.2" stroke="#b0b0b0" stroke-width="1.6"/><path d="M1425.6 214.8 V820.2" stroke="#555" stroke-width="1.8" stroke-dasharray="2 2.5 2 15.5" stroke-dashoffset="17.8"/><path d="M1425.6 478.9 V556.1" stroke="#b4b4f0" stroke-width="2.2"/><path d="M1425.8 479.9 V555.1" stroke="#0000ff" stroke-width="1.8" stroke-dasharray="3 1.6"/><rect x="1337" y="66" width="1209" height="857" fill="none" stroke="#6c6c6c" stroke-width="2"/><path d="M1342.0 923 V931" stroke="#6c6c6c" stroke-width="2"/><path d="M1342.0 66 V58" stroke="#6c6c6c" stroke-width="2"/><path d="M1426.0 923 V931" stroke="#6c6c6c" stroke-width="2"/><path d="M1426.0 66 V58" stroke="#6c6c6c" stroke-width="2"/><path d="M1510.0 923 V931" stroke="#6c6c6c" stroke-width="2"/><path d="M1510.0 66 V58" stroke="#6c6c6c" stroke-width="2"/><path d="M1594.0 923 V931" stroke="#6c6c6c" stroke-width="2"/><path d="M1594.0 66 V58" stroke="#6c6c6c" stroke-width="2"/><path d="M1678.0 923 V931" stroke="#6c6c6c" stroke-width="2"/><path d="M1678.0 66 V58" stroke="#6c6c6c" stroke-width="2"/><path d="M1763.0 923 V931" stroke="#6c6c6c" stroke-width="2"/><path d="M1763.0 66 V58" stroke="#6c6c6c" stroke-width="2"/><path d="M1847.0 923 V931" stroke="#6c6c6c" stroke-width="2"/><path d="M1847.0 66 V58" stroke="#6c6c6c" stroke-width="2"/><path d="M1931.0 923 V931" stroke="#6c6c6c" stroke-width="2"/><path d="M1931.0 66 V58" stroke="#6c6c6c" stroke-width="2"/><path d="M2015.0 923 V931" stroke="#6c6c6c" stroke-width="2"/><path d="M2015.0 66 V58" stroke="#6c6c6c" stroke-width="2"/><path d="M2099.0 923 V931" stroke="#6c6c6c" stroke-width="2"/><path d="M2099.0 66 V58" stroke="#6c6c6c" stroke-width="2"/><path d="M2183.0 923 V931" stroke="#6c6c6c" stroke-width="2"/><path d="M2183.0 66 V58" stroke="#6c6c6c" stroke-width="2"/><path d="M2268.0 923 V931" stroke="#6c6c6c" stroke-width="2"/><path d="M2268.0 66 V58" stroke="#6c6c6c" stroke-width="2"/><path d="M2352.0 923 V931" stroke="#6c6c6c" stroke-width="2"/><path d="M2352.0 66 V58" stroke="#6c6c6c" stroke-width="2"/><path d="M2436.0 923 V931" stroke="#6c6c6c" stroke-width="2"/><path d="M2436.0 66 V58" stroke="#6c6c6c" stroke-width="2"/><path d="M2520.0 923 V931" stroke="#6c6c6c" stroke-width="2"/><path d="M2520.0 66 V58" stroke="#6c6c6c" stroke-width="2"/><path d="M1337 854.0 H1329" stroke="#6c6c6c" stroke-width="2"/><path d="M2546 854.0 H2554" stroke="#6c6c6c" stroke-width="2"/><path d="M1337 770.0 H1329" stroke="#6c6c6c" stroke-width="2"/><path d="M2546 770.0 H2554" stroke="#6c6c6c" stroke-width="2"/><path d="M1337 686.0 H1329" stroke="#6c6c6c" stroke-width="2"/><path d="M2546 686.0 H2554" stroke="#6c6c6c" stroke-width="2"/><path d="M1337 602.0 H1329" stroke="#6c6c6c" stroke-width="2"/><path d="M2546 602.0 H2554" stroke="#6c6c6c" stroke-width="2"/><path d="M1337 518.0 H1329" stroke="#6c6c6c" stroke-width="2"/><path d="M2546 518.0 H2554" stroke="#6c6c6c" stroke-width="2"/><path d="M1337 433.0 H1329" stroke="#6c6c6c" stroke-width="2"/><path d="M2546 433.0 H2554" stroke="#6c6c6c" stroke-width="2"/><path d="M1337 349.0 H1329" stroke="#6c6c6c" stroke-width="2"/><path d="M2546 349.0 H2554" stroke="#6c6c6c" stroke-width="2"/><path d="M1337 265.0 H1329" stroke="#6c6c6c" stroke-width="2"/><path d="M2546 265.0 H2554" stroke="#6c6c6c" stroke-width="2"/><path d="M1337 181.0 H1329" stroke="#6c6c6c" stroke-width="2"/><path d="M2546 181.0 H2554" stroke="#6c6c6c" stroke-width="2"/><path d="M1337 97.0 H1329" stroke="#6c6c6c" stroke-width="2"/><path d="M2546 97.0 H2554" stroke="#6c6c6c" stroke-width="2"/><path d="M1332 410 L1337 415.5 L1332 421.5 Z" fill="#000"/><path d="M2200.3 928 L2205.6 922.5 L2211.8 928 Z" fill="#000"/></svg>
<div class="t" style="left:1344px;top:930.92px;font-size:12.5px;color:#111;letter-spacing:1.1px;">-20</div>
<div class="t" style="left:1428px;top:930.92px;font-size:12.5px;color:#111;letter-spacing:1.1px;">0</div>
<div class="t" style="left:1512px;top:930.92px;font-size:12.5px;color:#111;letter-spacing:1.1px;">20</div>
<div class="t" style="left:1596px;top:930.92px;font-size:12.5px;color:#111;letter-spacing:1.1px;">40</div>
<div class="t" style="left:1680px;top:930.92px;font-size:12.5px;color:#111;letter-spacing:1.1px;">60</div>
<div class="t" style="left:1765px;top:930.92px;font-size:12.5px;color:#111;letter-spacing:1.1px;">80</div>
<div class="t" style="left:1849px;top:930.92px;font-size:12.5px;color:#111;letter-spacing:1.1px;">100</div>
<div class="t" style="left:1933px;top:930.92px;font-size:12.5px;color:#111;letter-spacing:1.1px;">120</div>
<div class="t" style="left:2017px;top:930.92px;font-size:12.5px;color:#111;letter-spacing:1.1px;">140</div>
<div class="t" style="left:2101px;top:930.92px;font-size:12.5px;color:#111;letter-spacing:1.1px;">160</div>
<div class="t" style="left:2185px;top:930.92px;font-size:12.5px;color:#111;letter-spacing:1.1px;">180</div>
<div class="t" style="left:2270px;top:930.92px;font-size:12.5px;color:#111;letter-spacing:1.1px;">200</div>
<div class="t" style="left:2354px;top:930.92px;font-size:12.5px;color:#111;letter-spacing:1.1px;">220</div>
<div class="t" style="left:2438px;top:930.92px;font-size:12.5px;color:#111;letter-spacing:1.1px;">240</div>
<div class="t" style="left:2522px;top:930.92px;font-size:12.5px;color:#111;letter-spacing:1.1px;">260</div>
<div class="t" style="right:1225.4px;top:853.92px;font-size:12.5px;color:#111;text-align:right;letter-spacing:1.1px;">-80</div>
<div class="t" style="right:1225.4px;top:769.92px;font-size:12.5px;color:#111;text-align:right;letter-spacing:1.1px;">-60</div>
<div class="t" style="right:1225.4px;top:685.92px;font-size:12.5px;color:#111;text-align:right;letter-spacing:1.1px;">-40</div>
<div class="t" style="right:1225.4px;top:601.92px;font-size:12.5px;color:#111;text-align:right;letter-spacing:1.1px;">-20</div>
<div class="t" style="right:1225.4px;top:517.92px;font-size:12.5px;color:#111;text-align:right;letter-spacing:1.1px;">0</div>
<div class="t" style="right:1225.4px;top:432.92px;font-size:12.5px;color:#111;text-align:right;letter-spacing:1.1px;">20</div>
<div class="t" style="right:1225.4px;top:348.92px;font-size:12.5px;color:#111;text-align:right;letter-spacing:1.1px;">40</div>
<div class="t" style="right:1225.4px;top:264.92px;font-size:12.5px;color:#111;text-align:right;letter-spacing:1.1px;">60</div>
<div class="t" style="right:1225.4px;top:180.92px;font-size:12.5px;color:#111;text-align:right;letter-spacing:1.1px;">80</div>
<div class="t" style="right:1225.4px;top:96.92px;font-size:12.5px;color:#111;text-align:right;letter-spacing:1.1px;">100</div>
<div class="t" style="left:1341.5px;top:66.67px;font-size:12.2px;color:#111;letter-spacing:0.3px;">µm</div>
<div class="t" style="left:2523.5px;top:904.67px;font-size:12.2px;color:#111;letter-spacing:0.3px;">µm</div>
<div class="t" style="left:1428.5px;top:908.42px;font-size:12.5px;color:#b0b0b0;letter-spacing:0.6px;">r=0</div>
<svg class="a" style="left:2519px;top:70px" width="22" height="22" viewBox="0 0 22 22"><defs><linearGradient id="lg1" x1="0" x2="1"><stop offset="0" stop-color="#f4e850"/><stop offset="0.55" stop-color="#e8e060"/><stop offset="1" stop-color="#40a8e8"/></linearGradient></defs><path d="M1.5 6 L15 1 L20.5 14 L7 20.5 Z" fill="#ececec"/><rect x="4.5" y="5.5" width="13" height="10.5" rx="3.2" fill="#1a3aa8"/><path d="M6.5 7.5 H14.5 L16 12 L14.5 14.5 H6.5 Z" fill="url(#lg1)"/><path d="M10 10.5 L15.5 8 V13 Z" fill="#2a70d0"/></svg>
<div class="t" style="left:1298px;top:963.16px;font-size:12.8px;color:#2f5fa8;">Messages</div>
<svg class="a" style="left:1365px;top:965.5px" width="9" height="9" viewBox="0 0 9 9"><path d="M0.5 0.5 L8.5 8.5 M8.5 0.5 L0.5 8.5" stroke="#bcc0c8" stroke-width="1.25"/></svg>
<div class="t" style="left:1404px;top:963.16px;font-size:12.8px;color:#333;">Progress</div>
<div class="t" style="left:1483px;top:963.16px;font-size:12.8px;color:#333;">Log</div>
<div class="t" style="left:1532px;top:963.16px;font-size:12.8px;color:#333;">Probe Table 1</div>
<svg class="a" style="left:1621px;top:965.5px" width="9" height="9" viewBox="0 0 9 9"><path d="M0.5 0.5 L8.5 8.5 M8.5 0.5 L0.5 8.5" stroke="#bcc0c8" stroke-width="1.25"/></svg>
<div class="a" style="left:1286px;top:984px;width:1269px;height:1px;background:#d6d8dc;"></div>
<div class="a" style="left:1294px;top:982px;width:87px;height:2px;background:#2a7fd0;"></div>
<svg class="a" style="left:1296px;top:987px" width="10" height="17" viewBox="0 0 10 17"><path d="M1 0.5 L4.5 8" stroke="#555" stroke-width="1.2"/><path d="M3 7 L7 13 L9 16 L4 16 L1.5 9 Z" fill="#f0a848"/></svg>
<div class="a" style="left:1314px;top:987px;width:20px;height:19px;background:#cfe6fa;border:1px solid #a9d1f3;border-radius:3px;"></div>
<svg class="a" style="left:1316px;top:990px" width="16" height="14" viewBox="0 0 16 14"><rect x="0.7" y="0.7" width="12" height="10" fill="#fff" stroke="#2f8ad4" stroke-width="1.2"/><path d="M0.7 3 H12.7" stroke="#2f8ad4" stroke-width="1"/><rect x="5" y="5" width="10.5" height="8.5" fill="#fff" stroke="#2f8ad4" stroke-width="1.2"/><path d="M5 5.5 L10.2 9.5 L15.5 5.5" fill="none" stroke="#2f8ad4" stroke-width="0.9"/></svg>
<div class="a" style="left:1290px;top:1009px;width:1261px;height:174px;background:#f9fafd;border:1px solid #d6d6d8;border-bottom:2px solid #d0d0d4;"></div>
<div class="a" style="left:1291px;top:1010px;width:1240px;height:171px;overflow:hidden;">
<div class="t" style="left:2.8px;top:-6.16px;font-size:12px;color:#000;letter-spacing:-0.16px;">[May 15, 2025, 5:38 PM] Number of degrees of freedom solved for: 1564 (plus 2 internal DOFs).</div>
<div class="t" style="left:2.8px;top:8.84px;font-size:12px;color:#000;letter-spacing:-0.16px;">[May 15, 2025, 6:20 PM] Number of degrees of freedom solved for: 1564 (plus 2 internal DOFs).</div>
<div class="t" style="left:2.8px;top:23.84px;font-size:12px;color:#000;letter-spacing:-0.16px;">[May 15, 2025, 6:24 PM] Number of degrees of freedom solved for: 1564 (plus 2 internal DOFs).</div>
<div class="t" style="left:2.8px;top:38.84px;font-size:12px;color:#000;letter-spacing:-0.1px;">[May 15, 2025, 6:42 PM] Saved file: C:\Users\User\Desktop\Ali\horn_modal2.mph (38 MB)</div>
<div class="t" style="left:2.8px;top:53.84px;font-size:12px;color:#000;letter-spacing:-0.08px;">[May 15, 2025, 6:42 PM] Opened file: C:\Users\User\Desktop\Ali\eigenmodes_air_bubble_Harmonic.mph</div>
<div class="t" style="left:2.8px;top:68.84px;font-size:12px;color:#000;letter-spacing:-0.2px;">[May 15, 2025, 6:47 PM] Number of degrees of freedom solved for: 7523.</div>
<div class="t" style="left:2.8px;top:83.84px;font-size:12px;color:#000;letter-spacing:-0.2px;">[May 15, 2025, 6:47 PM] Solution time (Study 3): 7 s.</div>
<div class="t" style="left:2.8px;top:98.84px;font-size:12px;color:#000;letter-spacing:-0.2px;">[May 15, 2025, 6:51 PM] Number of degrees of freedom solved for: 18810.</div>
<div class="t" style="left:2.8px;top:113.84px;font-size:12px;color:#000;letter-spacing:-0.2px;">[May 15, 2025, 6:51 PM] Solution time (Study 3): 8 s.</div>
<div class="t" style="left:2.8px;top:128.84px;font-size:12px;color:#000;letter-spacing:-0.2px;">[May 15, 2025, 7:13 PM] Formed union of 2 solid objects.</div>
<div class="t" style="left:2.8px;top:143.84px;font-size:12px;color:#000;letter-spacing:-0.2px;">[May 15, 2025, 7:13 PM] Finalized geometry has 5 domains, 14 boundaries, and 10 vertices.</div>
</div>
<div class="a" style="left:2533px;top:1010px;width:17px;height:171px;background:#fdfdfd;"></div>
<div class="a" style="left:2533px;top:1010px;width:17px;height:17px;background:#f7f7f7;"></div>
<div class="a" style="left:2533px;top:1052px;width:17px;height:112px;background:#e6e6e6;"></div>
<div class="a" style="left:2533px;top:1164px;width:17px;height:17px;background:#f7f7f7;"></div>
<svg class="a" style="left:2537px;top:1015px" width="10" height="6" viewBox="0 0 10 6"><path d="M1 5 L5 1 L9 5" fill="none" stroke="#c0c0c0" stroke-width="1.2"/></svg>
<svg class="a" style="left:2537px;top:1170px" width="10" height="6" viewBox="0 0 10 6"><path d="M1 1 L5 5 L9 1" fill="none" stroke="#c0c0c0" stroke-width="1.2"/></svg>
<div class="t" style="left:1882px;top:1196.34px;font-size:12px;color:#000;font-weight:bold;">2.01 55 | 0.01 55</div>
</body></html>
